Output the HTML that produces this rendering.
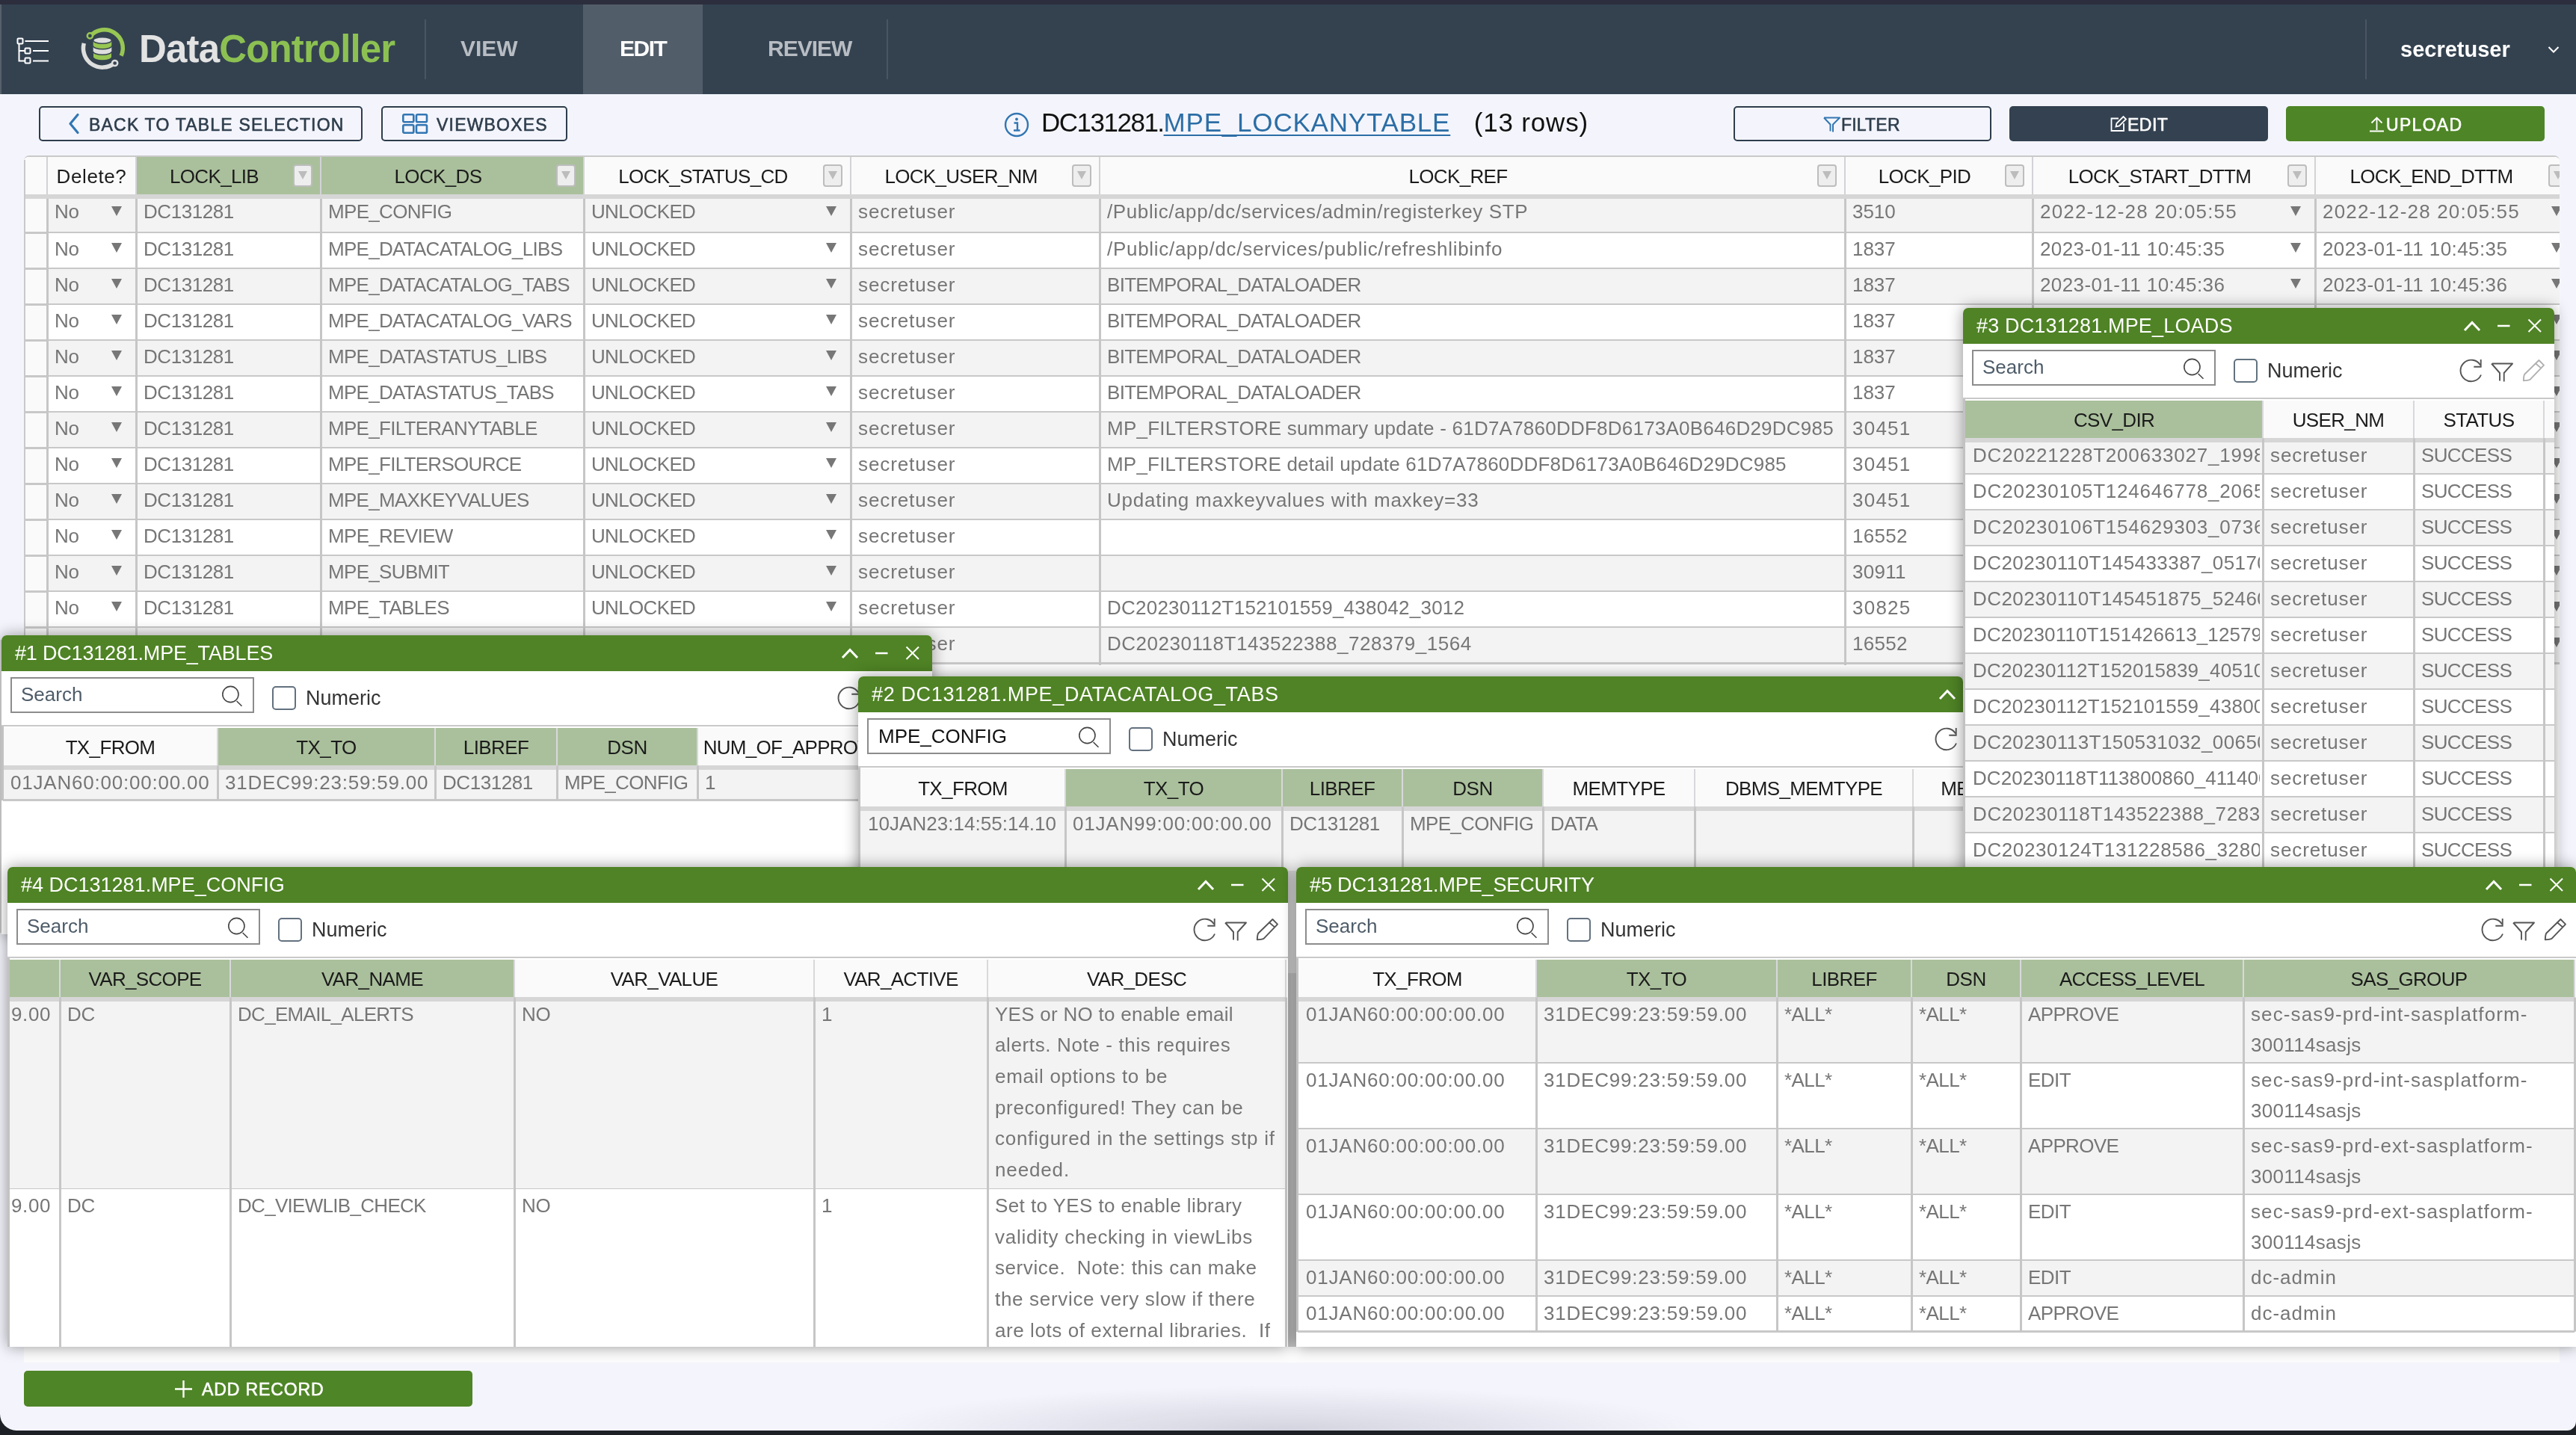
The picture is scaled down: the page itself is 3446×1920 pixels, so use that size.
<!DOCTYPE html><html><head><meta charset="utf-8"><style>
*{box-sizing:border-box;margin:0;padding:0}
html,body{width:3446px;height:1920px;overflow:hidden;background:#f4f5fc;font-family:"Liberation Sans",sans-serif}
body div, body span, body svg{position:absolute}
.c{font-size:26px;color:#767676;white-space:pre-wrap;overflow:hidden;word-break:normal}
.nw{white-space:nowrap}
.dd{width:0;height:0;border-left:7px solid transparent;border-right:7px solid transparent;border-top:13px solid #777}
.fb{width:26px;height:30px;background:#eeeeee;border:2px solid #bdbdbd;border-radius:4px}
.fb::after{content:"";position:absolute;left:5px;top:7px;border-left:6px solid transparent;border-right:6px solid transparent;border-top:11px solid #bcbcbc}
.win{background:#fff;box-shadow:0 0 20px rgba(0,0,0,.4);overflow:hidden;border-radius:7px 7px 0 0}
.tb{left:0;top:0;right:0;height:48px;background:#4f8325}
.tt{font-size:27px;color:#fff;top:10px;white-space:nowrap}
.srch{border:2px solid #8c8c8c;background:#fff}
.ph{font-size:26px;color:#4e5b68;left:14px;top:8px}
.chk{width:32px;height:32px;border:2px solid #62717f;border-radius:5px;background:#fff}
.num{font-size:26px;color:#2a2a2a}
</style></head><body><div id="root" style="left:0;top:0;width:3446px;height:1920px;will-change:transform">

<div style="left:0px;top:0px;width:3446px;height:126px;background:#344250"></div>
<div style="left:0px;top:0px;width:3446px;height:6px;background:#2c2e3d"></div>
<div style="left:0px;top:6px;width:2px;height:120px;background:#56606b"></div>
<svg style="left:0;top:0" width="200" height="126" viewBox="0 0 200 126">
<g fill="none" stroke="#fff" stroke-width="2" transform="translate(0 1)">
<rect x="23.5" y="50.5" width="7" height="7" rx="1"/>
<rect x="33.5" y="63.5" width="7" height="7" rx="1"/>
<rect x="33.5" y="76.5" width="7" height="7" rx="1"/>
<path d="M25.5 57.5 V80.5 H33.5 M25.5 67 H33.5"/>
<path d="M33.5 54 H65 M44 67 H65 M44 80.5 H65"/>
</g>
<g transform="translate(137 65.5) scale(0.95) translate(-137 -64)"><g fill="none" stroke-width="5.8">
<path d="M111 56 A27 27 0 0 0 154 84" stroke="#dedede"/>
<path d="M120 46 A26 26 0 0 1 163.5 73.5" stroke="#98c653"/>
</g>
<circle cx="154.5" cy="84" r="3.8" fill="#344250" stroke="#dedede" stroke-width="2.6"/>
<circle cx="119.5" cy="45.5" r="3.8" fill="#344250" stroke="#98c653" stroke-width="2.6"/>
</g><rect x="125" y="69" width="24" height="7" fill="#98c653"/>
<ellipse cx="137" cy="76" rx="12" ry="4.2" fill="#98c653"/>
<ellipse cx="137" cy="69" rx="12.3" ry="4.2" fill="#dedede" stroke="#344250" stroke-width="1.4"/>
<rect x="124.7" y="61" width="24.6" height="8" fill="#dedede"/>
<ellipse cx="137" cy="61.5" rx="12.3" ry="4.2" fill="#98c653" stroke="#344250" stroke-width="1.4"/>
<rect x="124.7" y="54" width="24.6" height="7.5" fill="#98c653"/>
<ellipse cx="137" cy="54" rx="12.3" ry="4.2" fill="#dedede" stroke="#344250" stroke-width="1.4"/>
</svg>
<div style="left:186px;top:36px;font-size:51px;font-weight:bold;white-space:nowrap;line-height:60px;letter-spacing:-0.85px"><span style="position:static;color:#e3e3e3">Data</span><span style="position:static;color:#8cc152">Controller</span></div>
<div style="left:568px;top:26px;width:2px;height:80px;background:#4a5562"></div>
<div style="left:1186px;top:26px;width:2px;height:80px;background:#4a5562"></div>
<div style="left:3164px;top:26px;width:2px;height:80px;background:#4a5562"></div>
<div style="left:780px;top:6px;width:160px;height:120px;background:#525d6a"></div>
<div style="left:616px;top:45px;font-size:30px;font-weight:bold;white-space:nowrap;line-height:40px;letter-spacing:0px;color:#b8bdc3">VIEW</div>
<div style="left:829px;top:45px;font-size:30px;font-weight:bold;white-space:nowrap;line-height:40px;letter-spacing:0px;color:#fff;letter-spacing:-1.5px">EDIT</div>
<div style="left:1027px;top:45px;font-size:30px;font-weight:bold;white-space:nowrap;line-height:40px;letter-spacing:0px;color:#b8bdc3;letter-spacing:-1px">REVIEW</div>
<div style="left:3211px;top:46px;font-size:29px;font-weight:bold;white-space:nowrap;line-height:40px;color:#fff">secretuser</div>
<svg style="left:3400px;top:55px" width="30" height="20"><path d="M9.5 8 L16 14.5 L22.5 8" fill="none" stroke="#fff" stroke-width="2"/></svg>
<div style="left:52px;top:142px;width:433px;height:47px;border:2px solid #2e3d4c;border-radius:5px"></div>
<svg style="left:86px;top:150px" width="24" height="32"><path d="M18 3.5 L8 15.5 L18 27.5" fill="none" stroke="#3276b3" stroke-width="3.2" stroke-linecap="round" stroke-linejoin="round"/></svg>
<div style="left:119px;top:152px;font-size:23px;white-space:nowrap;line-height:30px;letter-spacing:1px;color:#2e3d4c;-webkit-text-stroke:0.6px currentColor;letter-spacing:1.2px">BACK TO TABLE SELECTION</div>
<div style="left:510px;top:142px;width:249px;height:47px;border:2px solid #2e3d4c;border-radius:5px"></div>
<svg style="left:536px;top:150px" width="40" height="32"><g fill="none" stroke="#3276b3" stroke-width="2.6">
<rect x="3.3" y="3.3" width="14" height="10" rx="1.5"/><rect x="21" y="3.3" width="14" height="10" rx="1.5"/>
<rect x="3.3" y="17.3" width="14" height="10.5" rx="1.5"/><rect x="21" y="17.3" width="14" height="10.5" rx="1.5"/></g></svg>
<div style="left:584px;top:152px;font-size:23px;white-space:nowrap;line-height:30px;letter-spacing:1px;color:#2e3d4c;-webkit-text-stroke:0.6px currentColor;letter-spacing:1.2px">VIEWBOXES</div>
<svg style="left:1342px;top:149px" width="36" height="36"><circle cx="18" cy="18" r="15" fill="none" stroke="#3276b3" stroke-width="2.4"/>
<circle cx="18" cy="10.5" r="1.9" fill="#3276b3"/><path d="M14.5 15.5 H19 V25.5 M14 25.5 H22.5" fill="none" stroke="#3276b3" stroke-width="2.4"/></svg>
<div style="left:1393px;top:141px;font-size:35px;white-space:nowrap;line-height:46px;color:#111"><span style="position:static;letter-spacing:-1.5px">DC131281.</span><span style="position:static;color:#2c6ea6;text-decoration:underline;text-decoration-thickness:2px;text-underline-offset:4px;letter-spacing:0.8px">MPE_LOCKANYTABLE</span><span style="position:static;letter-spacing:0.8px">&nbsp;&nbsp;&nbsp;(13 rows)</span></div>
<div style="left:2319px;top:142px;width:345px;height:47px;border:2px solid #2e3d4c;border-radius:5px"></div>
<svg style="left:2436px;top:154px" width="28" height="26"><path d="M4 3.5 H25 L16 12.5 V22.5 M12.5 21.5 V12.5 L4 3.5" fill="none" stroke="#3276b3" stroke-width="2" stroke-linejoin="round"/></svg>
<div style="left:2463px;top:152px;font-size:23px;white-space:nowrap;line-height:30px;letter-spacing:1px;color:#2e3d4c;-webkit-text-stroke:0.6px currentColor;letter-spacing:0.2px">FILTER</div>
<div style="left:2688px;top:142px;width:346px;height:47px;background:#334150;border-radius:5px"></div>
<svg style="left:2820px;top:152px" width="28" height="28"><path d="M14 6.5 H4.5 V23 H21 V13" fill="none" stroke="#fff" stroke-width="1.8"/><path d="M10.5 17.5 L11.5 13 L20.5 4 L24 7.5 L15 16.5 Z" fill="none" stroke="#fff" stroke-width="1.8"/></svg>
<div style="left:2846px;top:152px;font-size:23px;white-space:nowrap;line-height:30px;letter-spacing:1px;color:#fff;-webkit-text-stroke:0.6px currentColor;letter-spacing:0.5px">EDIT</div>
<div style="left:3058px;top:142px;width:346px;height:47px;background:#4e8526;border-radius:5px"></div>
<svg style="left:3166px;top:152px" width="28" height="30"><path d="M13.5 5.5 V22 M6.5 12.5 L13.5 5.5 L20.5 12.5 M4 23.5 H23" fill="none" stroke="#fff" stroke-width="1.8"/></svg>
<div style="left:3192px;top:152px;font-size:23px;white-space:nowrap;line-height:30px;letter-spacing:1px;color:#fff;-webkit-text-stroke:0.6px currentColor;letter-spacing:1.3px">UPLOAD</div>
<div style="left:32px;top:208px;width:3392px;height:1615px;overflow:hidden;border-radius:7px 7px 0 0;background:#fcfcfd;border-top:2px solid #c9c9c9">
<div style="left:1px;top:0px;width:30px;height:50px;background:#fafafa"></div>
<div style="left:31px;top:0px;width:119px;height:50px;background:#fafafa"></div>
<div style="left:150px;top:0px;width:247px;height:50px;background:#aac09c"></div>
<div style="left:397px;top:0px;width:352px;height:50px;background:#aac09c"></div>
<div style="left:749px;top:0px;width:357px;height:50px;background:#fafafa"></div>
<div style="left:1106px;top:0px;width:333px;height:50px;background:#fafafa"></div>
<div style="left:1439px;top:0px;width:997px;height:50px;background:#fafafa"></div>
<div style="left:2436px;top:0px;width:251px;height:50px;background:#fafafa"></div>
<div style="left:2687px;top:0px;width:378px;height:50px;background:#fafafa"></div>
<div style="left:3065px;top:0px;width:349px;height:50px;background:#fafafa"></div>
<div style="left:0px;top:54px;width:3400px;height:48px;background:#f3f3f3"></div>
<div style="left:0px;top:100px;width:3400px;height:2.5px;background:#c8c8c8"></div>
<div style="left:0px;top:102px;width:3400px;height:48px;background:#fff"></div>
<div style="left:0px;top:148px;width:3400px;height:2.5px;background:#c8c8c8"></div>
<div style="left:0px;top:150px;width:3400px;height:48px;background:#f3f3f3"></div>
<div style="left:0px;top:196px;width:3400px;height:2.5px;background:#c8c8c8"></div>
<div style="left:0px;top:198px;width:3400px;height:48px;background:#fff"></div>
<div style="left:0px;top:244px;width:3400px;height:2.5px;background:#c8c8c8"></div>
<div style="left:0px;top:246px;width:3400px;height:48px;background:#f3f3f3"></div>
<div style="left:0px;top:292px;width:3400px;height:2.5px;background:#c8c8c8"></div>
<div style="left:0px;top:294px;width:3400px;height:48px;background:#fff"></div>
<div style="left:0px;top:340px;width:3400px;height:2.5px;background:#c8c8c8"></div>
<div style="left:0px;top:342px;width:3400px;height:48px;background:#f3f3f3"></div>
<div style="left:0px;top:388px;width:3400px;height:2.5px;background:#c8c8c8"></div>
<div style="left:0px;top:390px;width:3400px;height:48px;background:#fff"></div>
<div style="left:0px;top:436px;width:3400px;height:2.5px;background:#c8c8c8"></div>
<div style="left:0px;top:438px;width:3400px;height:48px;background:#f3f3f3"></div>
<div style="left:0px;top:484px;width:3400px;height:2.5px;background:#c8c8c8"></div>
<div style="left:0px;top:486px;width:3400px;height:48px;background:#fff"></div>
<div style="left:0px;top:532px;width:3400px;height:2.5px;background:#c8c8c8"></div>
<div style="left:0px;top:534px;width:3400px;height:48px;background:#f3f3f3"></div>
<div style="left:0px;top:580px;width:3400px;height:2.5px;background:#c8c8c8"></div>
<div style="left:0px;top:582px;width:3400px;height:48px;background:#fff"></div>
<div style="left:0px;top:628px;width:3400px;height:2.5px;background:#c8c8c8"></div>
<div style="left:0px;top:630px;width:3400px;height:48px;background:#f3f3f3"></div>
<div style="left:0px;top:676px;width:3400px;height:2.5px;background:#c8c8c8"></div>
<div style="left:2px;top:54px;width:29px;height:624px;background:#fafafa"></div>
<div style="left:2px;top:100px;width:29px;height:2.5px;background:#c8c8c8"></div>
<div style="left:2px;top:148px;width:29px;height:2.5px;background:#c8c8c8"></div>
<div style="left:2px;top:196px;width:29px;height:2.5px;background:#c8c8c8"></div>
<div style="left:2px;top:244px;width:29px;height:2.5px;background:#c8c8c8"></div>
<div style="left:2px;top:292px;width:29px;height:2.5px;background:#c8c8c8"></div>
<div style="left:2px;top:340px;width:29px;height:2.5px;background:#c8c8c8"></div>
<div style="left:2px;top:388px;width:29px;height:2.5px;background:#c8c8c8"></div>
<div style="left:2px;top:436px;width:29px;height:2.5px;background:#c8c8c8"></div>
<div style="left:2px;top:484px;width:29px;height:2.5px;background:#c8c8c8"></div>
<div style="left:2px;top:532px;width:29px;height:2.5px;background:#c8c8c8"></div>
<div style="left:2px;top:580px;width:29px;height:2.5px;background:#c8c8c8"></div>
<div style="left:2px;top:628px;width:29px;height:2.5px;background:#c8c8c8"></div>
<div style="left:2px;top:676px;width:29px;height:2.5px;background:#c8c8c8"></div>
<div style="left:0px;top:50px;width:3400px;height:6px;background:#d6d6d6"></div>
<div style="left:30px;top:0px;width:2px;height:50px;background:#d3d3d7"></div>
<div style="left:29.5px;top:56px;width:3px;height:624px;background:#c6c6c6"></div>
<div style="left:149px;top:0px;width:2px;height:50px;background:#d3d3d7"></div>
<div style="left:148.5px;top:56px;width:3px;height:624px;background:#c6c6c6"></div>
<div style="left:31px;top:0px;width:119px;height:50px;line-height:52px;text-align:center;color:#1b1b1b;font-size:26px;white-space:nowrap"><span style="position:static;letter-spacing:0.61px">Delete?</span></div>
<div style="left:396px;top:0px;width:2px;height:50px;background:#d3d3d7"></div>
<div style="left:395.5px;top:56px;width:3px;height:624px;background:#c6c6c6"></div>
<div style="left:150px;top:0px;width:209px;height:50px;line-height:52px;text-align:center;color:#1b1b1b;font-size:26px;white-space:nowrap"><span style="position:static;letter-spacing:-0.65px">LOCK_LIB</span></div>
<div class="fb" style="left:360px;top:10px"></div>
<div style="left:748px;top:0px;width:2px;height:50px;background:#d3d3d7"></div>
<div style="left:747.5px;top:56px;width:3px;height:624px;background:#c6c6c6"></div>
<div style="left:397px;top:0px;width:314px;height:50px;line-height:52px;text-align:center;color:#1b1b1b;font-size:26px;white-space:nowrap"><span style="position:static;letter-spacing:-0.64px">LOCK_DS</span></div>
<div class="fb" style="left:712px;top:10px"></div>
<div style="left:1105px;top:0px;width:2px;height:50px;background:#d3d3d7"></div>
<div style="left:1104.5px;top:56px;width:3px;height:624px;background:#c6c6c6"></div>
<div style="left:749px;top:0px;width:319px;height:50px;line-height:52px;text-align:center;color:#1b1b1b;font-size:26px;white-space:nowrap"><span style="position:static;letter-spacing:-0.69px">LOCK_STATUS_CD</span></div>
<div class="fb" style="left:1069px;top:10px"></div>
<div style="left:1438px;top:0px;width:2px;height:50px;background:#d3d3d7"></div>
<div style="left:1437.5px;top:56px;width:3px;height:624px;background:#c6c6c6"></div>
<div style="left:1106px;top:0px;width:295px;height:50px;line-height:52px;text-align:center;color:#1b1b1b;font-size:26px;white-space:nowrap"><span style="position:static;letter-spacing:-0.68px">LOCK_USER_NM</span></div>
<div class="fb" style="left:1402px;top:10px"></div>
<div style="left:2435px;top:0px;width:2px;height:50px;background:#d3d3d7"></div>
<div style="left:2434.5px;top:56px;width:3px;height:624px;background:#c6c6c6"></div>
<div style="left:1439px;top:0px;width:959px;height:50px;line-height:52px;text-align:center;color:#1b1b1b;font-size:26px;white-space:nowrap"><span style="position:static;letter-spacing:-0.65px">LOCK_REF</span></div>
<div class="fb" style="left:2399px;top:10px"></div>
<div style="left:2686px;top:0px;width:2px;height:50px;background:#d3d3d7"></div>
<div style="left:2685.5px;top:56px;width:3px;height:624px;background:#c6c6c6"></div>
<div style="left:2436px;top:0px;width:213px;height:50px;line-height:52px;text-align:center;color:#1b1b1b;font-size:26px;white-space:nowrap"><span style="position:static;letter-spacing:-0.65px">LOCK_PID</span></div>
<div class="fb" style="left:2650px;top:10px"></div>
<div style="left:3064px;top:0px;width:2px;height:50px;background:#d3d3d7"></div>
<div style="left:3063.5px;top:56px;width:3px;height:624px;background:#c6c6c6"></div>
<div style="left:2687px;top:0px;width:340px;height:50px;line-height:52px;text-align:center;color:#1b1b1b;font-size:26px;white-space:nowrap"><span style="position:static;letter-spacing:-0.69px">LOCK_START_DTTM</span></div>
<div class="fb" style="left:3028px;top:10px"></div>
<div style="left:3413px;top:0px;width:2px;height:50px;background:#d3d3d7"></div>
<div style="left:3412.5px;top:56px;width:3px;height:624px;background:#c6c6c6"></div>
<div style="left:3065px;top:0px;width:311px;height:50px;line-height:52px;text-align:center;color:#1b1b1b;font-size:26px;white-space:nowrap"><span style="position:static;letter-spacing:-0.69px">LOCK_END_DTTM</span></div>
<div class="fb" style="left:3377px;top:10px"></div>
<div class="c nw" style="left:41px;top:55px;line-height:36px"><span style="position:static;letter-spacing:-0.38px">No</span></div>
<div class="dd" style="left:117px;top:66px"></div>
<div class="c nw" style="left:160px;top:55px;line-height:36px"><span style="position:static;letter-spacing:-0.43px">DC131281</span></div>
<div class="c nw" style="left:407px;top:55px;line-height:36px"><span style="position:static;letter-spacing:-0.67px">MPE_CONFIG</span></div>
<div class="c nw" style="left:759px;top:55px;line-height:36px"><span style="position:static;letter-spacing:-0.66px">UNLOCKED</span></div>
<div class="dd" style="left:1073px;top:66px"></div>
<div class="c nw" style="left:1116px;top:55px;line-height:36px"><span style="position:static;letter-spacing:0.90px">secretuser</span></div>
<div class="c nw" style="left:1449px;top:55px;line-height:36px"><span style="position:static;letter-spacing:0.60px">/Public/app/dc/services/admin/registerkey STP</span></div>
<div class="c nw" style="left:2446px;top:55px;line-height:36px"><span style="position:static;letter-spacing:-0.05px">3510</span></div>
<div class="c nw" style="left:2697px;top:55px;line-height:36px"><span style="position:static;letter-spacing:1.18px">2022-12-28 20:05:55</span></div>
<div class="dd" style="left:3032px;top:66px"></div>
<div class="c nw" style="left:3075px;top:55px;line-height:36px"><span style="position:static;letter-spacing:1.18px">2022-12-28 20:05:55</span></div>
<div class="dd" style="left:3381px;top:66px"></div>
<div class="c nw" style="left:41px;top:105px;line-height:36px"><span style="position:static;letter-spacing:-0.38px">No</span></div>
<div class="dd" style="left:117px;top:115px"></div>
<div class="c nw" style="left:160px;top:105px;line-height:36px"><span style="position:static;letter-spacing:-0.43px">DC131281</span></div>
<div class="c nw" style="left:407px;top:105px;line-height:36px"><span style="position:static;letter-spacing:-0.71px">MPE_DATACATALOG_LIBS</span></div>
<div class="c nw" style="left:759px;top:105px;line-height:36px"><span style="position:static;letter-spacing:-0.66px">UNLOCKED</span></div>
<div class="dd" style="left:1073px;top:115px"></div>
<div class="c nw" style="left:1116px;top:105px;line-height:36px"><span style="position:static;letter-spacing:0.90px">secretuser</span></div>
<div class="c nw" style="left:1449px;top:105px;line-height:36px"><span style="position:static;letter-spacing:0.71px">/Public/app/dc/services/public/refreshlibinfo</span></div>
<div class="c nw" style="left:2446px;top:105px;line-height:36px"><span style="position:static;letter-spacing:-0.05px">1837</span></div>
<div class="c nw" style="left:2697px;top:105px;line-height:36px"><span style="position:static;letter-spacing:0.41px">2023-01-11 10:45:35</span></div>
<div class="dd" style="left:3032px;top:115px"></div>
<div class="c nw" style="left:3075px;top:105px;line-height:36px"><span style="position:static;letter-spacing:0.41px">2023-01-11 10:45:35</span></div>
<div class="dd" style="left:3381px;top:115px"></div>
<div class="c nw" style="left:41px;top:153px;line-height:36px"><span style="position:static;letter-spacing:-0.38px">No</span></div>
<div class="dd" style="left:117px;top:163px"></div>
<div class="c nw" style="left:160px;top:153px;line-height:36px"><span style="position:static;letter-spacing:-0.43px">DC131281</span></div>
<div class="c nw" style="left:407px;top:153px;line-height:36px"><span style="position:static;letter-spacing:-0.71px">MPE_DATACATALOG_TABS</span></div>
<div class="c nw" style="left:759px;top:153px;line-height:36px"><span style="position:static;letter-spacing:-0.66px">UNLOCKED</span></div>
<div class="dd" style="left:1073px;top:163px"></div>
<div class="c nw" style="left:1116px;top:153px;line-height:36px"><span style="position:static;letter-spacing:0.90px">secretuser</span></div>
<div class="c nw" style="left:1449px;top:153px;line-height:36px"><span style="position:static;letter-spacing:-0.71px">BITEMPORAL_DATALOADER</span></div>
<div class="c nw" style="left:2446px;top:153px;line-height:36px"><span style="position:static;letter-spacing:-0.05px">1837</span></div>
<div class="c nw" style="left:2697px;top:153px;line-height:36px"><span style="position:static;letter-spacing:0.41px">2023-01-11 10:45:36</span></div>
<div class="dd" style="left:3032px;top:163px"></div>
<div class="c nw" style="left:3075px;top:153px;line-height:36px"><span style="position:static;letter-spacing:0.41px">2023-01-11 10:45:36</span></div>
<div class="dd" style="left:3381px;top:163px"></div>
<div class="c nw" style="left:41px;top:201px;line-height:36px"><span style="position:static;letter-spacing:-0.38px">No</span></div>
<div class="dd" style="left:117px;top:211px"></div>
<div class="c nw" style="left:160px;top:201px;line-height:36px"><span style="position:static;letter-spacing:-0.43px">DC131281</span></div>
<div class="c nw" style="left:407px;top:201px;line-height:36px"><span style="position:static;letter-spacing:-0.71px">MPE_DATACATALOG_VARS</span></div>
<div class="c nw" style="left:759px;top:201px;line-height:36px"><span style="position:static;letter-spacing:-0.66px">UNLOCKED</span></div>
<div class="dd" style="left:1073px;top:211px"></div>
<div class="c nw" style="left:1116px;top:201px;line-height:36px"><span style="position:static;letter-spacing:0.90px">secretuser</span></div>
<div class="c nw" style="left:1449px;top:201px;line-height:36px"><span style="position:static;letter-spacing:-0.71px">BITEMPORAL_DATALOADER</span></div>
<div class="c nw" style="left:2446px;top:201px;line-height:36px"><span style="position:static;letter-spacing:-0.05px">1837</span></div>
<div class="c nw" style="left:2697px;top:201px;line-height:36px"><span style="position:static;letter-spacing:0.41px">2023-01-11 10:45:36</span></div>
<div class="dd" style="left:3032px;top:211px"></div>
<div class="c nw" style="left:3075px;top:201px;line-height:36px"><span style="position:static;letter-spacing:0.41px">2023-01-11 10:45:36</span></div>
<div class="dd" style="left:3381px;top:211px"></div>
<div class="c nw" style="left:41px;top:249px;line-height:36px"><span style="position:static;letter-spacing:-0.38px">No</span></div>
<div class="dd" style="left:117px;top:259px"></div>
<div class="c nw" style="left:160px;top:249px;line-height:36px"><span style="position:static;letter-spacing:-0.43px">DC131281</span></div>
<div class="c nw" style="left:407px;top:249px;line-height:36px"><span style="position:static;letter-spacing:-0.71px">MPE_DATASTATUS_LIBS</span></div>
<div class="c nw" style="left:759px;top:249px;line-height:36px"><span style="position:static;letter-spacing:-0.66px">UNLOCKED</span></div>
<div class="dd" style="left:1073px;top:259px"></div>
<div class="c nw" style="left:1116px;top:249px;line-height:36px"><span style="position:static;letter-spacing:0.90px">secretuser</span></div>
<div class="c nw" style="left:1449px;top:249px;line-height:36px"><span style="position:static;letter-spacing:-0.71px">BITEMPORAL_DATALOADER</span></div>
<div class="c nw" style="left:2446px;top:249px;line-height:36px"><span style="position:static;letter-spacing:-0.05px">1837</span></div>
<div class="c nw" style="left:2697px;top:249px;line-height:36px"><span style="position:static;letter-spacing:0.41px">2023-01-11 10:45:36</span></div>
<div class="dd" style="left:3032px;top:259px"></div>
<div class="c nw" style="left:3075px;top:249px;line-height:36px"><span style="position:static;letter-spacing:0.41px">2023-01-11 10:45:36</span></div>
<div class="dd" style="left:3381px;top:259px"></div>
<div class="c nw" style="left:41px;top:297px;line-height:36px"><span style="position:static;letter-spacing:-0.38px">No</span></div>
<div class="dd" style="left:117px;top:307px"></div>
<div class="c nw" style="left:160px;top:297px;line-height:36px"><span style="position:static;letter-spacing:-0.43px">DC131281</span></div>
<div class="c nw" style="left:407px;top:297px;line-height:36px"><span style="position:static;letter-spacing:-0.71px">MPE_DATASTATUS_TABS</span></div>
<div class="c nw" style="left:759px;top:297px;line-height:36px"><span style="position:static;letter-spacing:-0.66px">UNLOCKED</span></div>
<div class="dd" style="left:1073px;top:307px"></div>
<div class="c nw" style="left:1116px;top:297px;line-height:36px"><span style="position:static;letter-spacing:0.90px">secretuser</span></div>
<div class="c nw" style="left:1449px;top:297px;line-height:36px"><span style="position:static;letter-spacing:-0.71px">BITEMPORAL_DATALOADER</span></div>
<div class="c nw" style="left:2446px;top:297px;line-height:36px"><span style="position:static;letter-spacing:-0.05px">1837</span></div>
<div class="c nw" style="left:2697px;top:297px;line-height:36px"><span style="position:static;letter-spacing:0.41px">2023-01-11 10:45:36</span></div>
<div class="dd" style="left:3032px;top:307px"></div>
<div class="c nw" style="left:3075px;top:297px;line-height:36px"><span style="position:static;letter-spacing:0.41px">2023-01-11 10:45:36</span></div>
<div class="dd" style="left:3381px;top:307px"></div>
<div class="c nw" style="left:41px;top:345px;line-height:36px"><span style="position:static;letter-spacing:-0.38px">No</span></div>
<div class="dd" style="left:117px;top:355px"></div>
<div class="c nw" style="left:160px;top:345px;line-height:36px"><span style="position:static;letter-spacing:-0.43px">DC131281</span></div>
<div class="c nw" style="left:407px;top:345px;line-height:36px"><span style="position:static;letter-spacing:-0.71px">MPE_FILTERANYTABLE</span></div>
<div class="c nw" style="left:759px;top:345px;line-height:36px"><span style="position:static;letter-spacing:-0.66px">UNLOCKED</span></div>
<div class="dd" style="left:1073px;top:355px"></div>
<div class="c nw" style="left:1116px;top:345px;line-height:36px"><span style="position:static;letter-spacing:0.90px">secretuser</span></div>
<div class="c nw" style="left:1449px;top:345px;line-height:36px"><span style="position:static;letter-spacing:0.23px">MP_FILTERSTORE summary update - 61D7A7860DDF8D6173A0B646D29DC985</span></div>
<div class="c nw" style="left:2446px;top:345px;line-height:36px"><span style="position:static;letter-spacing:1.23px">30451</span></div>
<div class="c nw" style="left:2697px;top:345px;line-height:36px"><span style="position:static;letter-spacing:0.41px">2023-01-11 10:45:36</span></div>
<div class="dd" style="left:3032px;top:355px"></div>
<div class="c nw" style="left:3075px;top:345px;line-height:36px"><span style="position:static;letter-spacing:0.41px">2023-01-11 10:45:36</span></div>
<div class="dd" style="left:3381px;top:355px"></div>
<div class="c nw" style="left:41px;top:393px;line-height:36px"><span style="position:static;letter-spacing:-0.38px">No</span></div>
<div class="dd" style="left:117px;top:403px"></div>
<div class="c nw" style="left:160px;top:393px;line-height:36px"><span style="position:static;letter-spacing:-0.43px">DC131281</span></div>
<div class="c nw" style="left:407px;top:393px;line-height:36px"><span style="position:static;letter-spacing:-0.70px">MPE_FILTERSOURCE</span></div>
<div class="c nw" style="left:759px;top:393px;line-height:36px"><span style="position:static;letter-spacing:-0.66px">UNLOCKED</span></div>
<div class="dd" style="left:1073px;top:403px"></div>
<div class="c nw" style="left:1116px;top:393px;line-height:36px"><span style="position:static;letter-spacing:0.90px">secretuser</span></div>
<div class="c nw" style="left:1449px;top:393px;line-height:36px"><span style="position:static;letter-spacing:0.20px">MP_FILTERSTORE detail update 61D7A7860DDF8D6173A0B646D29DC985</span></div>
<div class="c nw" style="left:2446px;top:393px;line-height:36px"><span style="position:static;letter-spacing:1.23px">30451</span></div>
<div class="c nw" style="left:2697px;top:393px;line-height:36px"><span style="position:static;letter-spacing:0.41px">2023-01-11 10:45:36</span></div>
<div class="dd" style="left:3032px;top:403px"></div>
<div class="c nw" style="left:3075px;top:393px;line-height:36px"><span style="position:static;letter-spacing:0.41px">2023-01-11 10:45:36</span></div>
<div class="dd" style="left:3381px;top:403px"></div>
<div class="c nw" style="left:41px;top:441px;line-height:36px"><span style="position:static;letter-spacing:-0.38px">No</span></div>
<div class="dd" style="left:117px;top:451px"></div>
<div class="c nw" style="left:160px;top:441px;line-height:36px"><span style="position:static;letter-spacing:-0.43px">DC131281</span></div>
<div class="c nw" style="left:407px;top:441px;line-height:36px"><span style="position:static;letter-spacing:-0.70px">MPE_MAXKEYVALUES</span></div>
<div class="c nw" style="left:759px;top:441px;line-height:36px"><span style="position:static;letter-spacing:-0.66px">UNLOCKED</span></div>
<div class="dd" style="left:1073px;top:451px"></div>
<div class="c nw" style="left:1116px;top:441px;line-height:36px"><span style="position:static;letter-spacing:0.90px">secretuser</span></div>
<div class="c nw" style="left:1449px;top:441px;line-height:36px"><span style="position:static;letter-spacing:0.75px">Updating maxkeyvalues with maxkey=33</span></div>
<div class="c nw" style="left:2446px;top:441px;line-height:36px"><span style="position:static;letter-spacing:1.23px">30451</span></div>
<div class="c nw" style="left:2697px;top:441px;line-height:36px"><span style="position:static;letter-spacing:0.41px">2023-01-11 10:45:36</span></div>
<div class="dd" style="left:3032px;top:451px"></div>
<div class="c nw" style="left:3075px;top:441px;line-height:36px"><span style="position:static;letter-spacing:0.41px">2023-01-11 10:45:36</span></div>
<div class="dd" style="left:3381px;top:451px"></div>
<div class="c nw" style="left:41px;top:489px;line-height:36px"><span style="position:static;letter-spacing:-0.38px">No</span></div>
<div class="dd" style="left:117px;top:499px"></div>
<div class="c nw" style="left:160px;top:489px;line-height:36px"><span style="position:static;letter-spacing:-0.43px">DC131281</span></div>
<div class="c nw" style="left:407px;top:489px;line-height:36px"><span style="position:static;letter-spacing:-0.67px">MPE_REVIEW</span></div>
<div class="c nw" style="left:759px;top:489px;line-height:36px"><span style="position:static;letter-spacing:-0.66px">UNLOCKED</span></div>
<div class="dd" style="left:1073px;top:499px"></div>
<div class="c nw" style="left:1116px;top:489px;line-height:36px"><span style="position:static;letter-spacing:0.90px">secretuser</span></div>
<div class="c nw" style="left:2446px;top:489px;line-height:36px"><span style="position:static;letter-spacing:0.26px">16552</span></div>
<div class="c nw" style="left:2697px;top:489px;line-height:36px"><span style="position:static;letter-spacing:0.41px">2023-01-11 10:45:36</span></div>
<div class="dd" style="left:3032px;top:499px"></div>
<div class="c nw" style="left:3075px;top:489px;line-height:36px"><span style="position:static;letter-spacing:0.41px">2023-01-11 10:45:36</span></div>
<div class="dd" style="left:3381px;top:499px"></div>
<div class="c nw" style="left:41px;top:537px;line-height:36px"><span style="position:static;letter-spacing:-0.38px">No</span></div>
<div class="dd" style="left:117px;top:547px"></div>
<div class="c nw" style="left:160px;top:537px;line-height:36px"><span style="position:static;letter-spacing:-0.43px">DC131281</span></div>
<div class="c nw" style="left:407px;top:537px;line-height:36px"><span style="position:static;letter-spacing:-0.67px">MPE_SUBMIT</span></div>
<div class="c nw" style="left:759px;top:537px;line-height:36px"><span style="position:static;letter-spacing:-0.66px">UNLOCKED</span></div>
<div class="dd" style="left:1073px;top:547px"></div>
<div class="c nw" style="left:1116px;top:537px;line-height:36px"><span style="position:static;letter-spacing:0.90px">secretuser</span></div>
<div class="c nw" style="left:2446px;top:537px;line-height:36px"><span style="position:static;letter-spacing:0.26px">30911</span></div>
<div class="c nw" style="left:2697px;top:537px;line-height:36px"><span style="position:static;letter-spacing:0.41px">2023-01-11 10:45:36</span></div>
<div class="dd" style="left:3032px;top:547px"></div>
<div class="c nw" style="left:3075px;top:537px;line-height:36px"><span style="position:static;letter-spacing:0.41px">2023-01-11 10:45:36</span></div>
<div class="dd" style="left:3381px;top:547px"></div>
<div class="c nw" style="left:41px;top:585px;line-height:36px"><span style="position:static;letter-spacing:-0.38px">No</span></div>
<div class="dd" style="left:117px;top:595px"></div>
<div class="c nw" style="left:160px;top:585px;line-height:36px"><span style="position:static;letter-spacing:-0.43px">DC131281</span></div>
<div class="c nw" style="left:407px;top:585px;line-height:36px"><span style="position:static;letter-spacing:-0.67px">MPE_TABLES</span></div>
<div class="c nw" style="left:759px;top:585px;line-height:36px"><span style="position:static;letter-spacing:-0.66px">UNLOCKED</span></div>
<div class="dd" style="left:1073px;top:595px"></div>
<div class="c nw" style="left:1116px;top:585px;line-height:36px"><span style="position:static;letter-spacing:0.90px">secretuser</span></div>
<div class="c nw" style="left:1449px;top:585px;line-height:36px"><span style="position:static;letter-spacing:0.23px">DC20230112T152101559_438042_3012</span></div>
<div class="c nw" style="left:2446px;top:585px;line-height:36px"><span style="position:static;letter-spacing:1.23px">30825</span></div>
<div class="c nw" style="left:2697px;top:585px;line-height:36px"><span style="position:static;letter-spacing:0.41px">2023-01-11 10:45:36</span></div>
<div class="dd" style="left:3032px;top:595px"></div>
<div class="c nw" style="left:3075px;top:585px;line-height:36px"><span style="position:static;letter-spacing:0.41px">2023-01-11 10:45:36</span></div>
<div class="dd" style="left:3381px;top:595px"></div>
<div class="c nw" style="left:41px;top:633px;line-height:36px"><span style="position:static;letter-spacing:-0.38px">No</span></div>
<div class="dd" style="left:117px;top:643px"></div>
<div class="c nw" style="left:160px;top:633px;line-height:36px"><span style="position:static;letter-spacing:-0.43px">DC131281</span></div>
<div class="c nw" style="left:407px;top:633px;line-height:36px"><span style="position:static;letter-spacing:-0.70px">MPE_VALIDATIONS</span></div>
<div class="c nw" style="left:759px;top:633px;line-height:36px"><span style="position:static;letter-spacing:-0.66px">UNLOCKED</span></div>
<div class="dd" style="left:1073px;top:643px"></div>
<div class="c nw" style="left:1116px;top:633px;line-height:36px"><span style="position:static;letter-spacing:0.90px">secretuser</span></div>
<div class="c nw" style="left:1449px;top:633px;line-height:36px"><span style="position:static;letter-spacing:0.53px">DC20230118T143522388_728379_1564</span></div>
<div class="c nw" style="left:2446px;top:633px;line-height:36px"><span style="position:static;letter-spacing:0.26px">16552</span></div>
<div class="c nw" style="left:2697px;top:633px;line-height:36px"><span style="position:static;letter-spacing:0.41px">2023-01-11 10:45:36</span></div>
<div class="dd" style="left:3032px;top:643px"></div>
<div class="c nw" style="left:3075px;top:633px;line-height:36px"><span style="position:static;letter-spacing:0.41px">2023-01-11 10:45:36</span></div>
<div class="dd" style="left:3381px;top:643px"></div>
</div>
<div style="left:32px;top:214px;width:2px;height:672px;background:#c9c9c9"></div>
<div class="win" style="left:2px;top:850px;width:1245px;height:400px;z-index:2">
<div class="tb" style="width:1245px"></div>
<div style="left:18px;top:6px;font-size:27px;color:#fff;line-height:36px;white-space:nowrap"><span style="position:static;letter-spacing:-0.19px">#1 DC131281.MPE_TABLES</span></div>
<svg style="left:1122px;top:7px" width="125" height="40" viewBox="0 0 125 40">
<path d="M3 23 L13 12.5 L23 23" fill="none" stroke="#fff" stroke-width="3"/>
<path d="M47 17 H63.5" stroke="#fff" stroke-width="2.6"/>
<path d="M88.5 8.5 L105 25 M105 8.5 L88.5 25" stroke="#fff" stroke-width="2"/>
</svg>
<div class="srch" style="left:12px;top:56px;width:326px;height:48px"></div>
<div style="left:26px;top:61px;font-size:26px;color:#4e5c69;line-height:36px;white-space:nowrap">Search</div>
<svg style="left:292px;top:65px" width="36" height="34"><g fill="none" stroke="#444" stroke-width="1.6"><circle cx="14.4" cy="14" r="10.6"/><path d="M22.6 23 L29.5 29.8"/></g></svg>
<div class="chk" style="left:362px;top:68px"></div>
<div style="left:407px;top:66px;font-size:27px;color:#333;line-height:36px;white-space:nowrap">Numeric</div>
<svg style="left:1118px;top:68px" width="120" height="34" viewBox="0 0 120 34"><g fill="none" stroke="#555" stroke-width="1.9"><path d="M29 21.5 A14.3 14.3 0 1 1 28.1 8.6"/><path d="M28.7 1 V10.7 H19.3"/><path d="M44 6.5 H71 L59.7 19 V30.5 M54 29.5 V19 L43 6.5" stroke-linejoin="round"/></g><g fill="none" stroke="#555" stroke-width="1.9" stroke-linejoin="round"><path d="M106.4 2 L113 8.6 L94.5 27.8 Q92 29 85.8 29.2 Q86 23 87.2 20.8 Z"/><path d="M102.2 6.5 L108.8 12.1"/></g></svg>
<div style="left:0px;top:120px;width:1245px;height:2px;background:#c9c9c9"></div>
<div style="left:2px;top:124px;width:287px;height:50px;background:#fafafa"></div>
<div style="left:289px;top:124px;width:291px;height:50px;background:#aac09c"></div>
<div style="left:580px;top:124px;width:163px;height:50px;background:#aac09c"></div>
<div style="left:743px;top:124px;width:188px;height:50px;background:#aac09c"></div>
<div style="left:931px;top:124px;width:429px;height:50px;background:#fafafa"></div>
<div style="left:2px;top:174.5px;width:1358px;height:46.0px;background:#f3f3f3"></div>
<div style="left:2px;top:219.25px;width:1358px;height:2.5px;background:#c8c8c8"></div>
<div style="left:2px;top:174px;width:1358px;height:6px;background:#d6d6d6"></div>
<div style="left:0px;top:122px;width:3px;height:98.5px;background:#c2c2c2"></div>
<div style="left:288px;top:124px;width:2px;height:50px;background:#d8d8dc"></div>
<div style="left:287.5px;top:174px;width:3px;height:46.5px;background:#c6c6c6;border-radius:1.5px"></div>
<div style="left:2px;top:124px;width:287px;height:50px;line-height:52px;text-align:center;color:#1b1b1b;font-size:26px;white-space:nowrap;overflow:hidden"><span style="position:static;letter-spacing:-0.64px">TX_FROM</span></div>
<div style="left:579px;top:124px;width:2px;height:50px;background:#d8d8dc"></div>
<div style="left:578.5px;top:174px;width:3px;height:46.5px;background:#c6c6c6;border-radius:1.5px"></div>
<div style="left:289px;top:124px;width:291px;height:50px;line-height:52px;text-align:center;color:#1b1b1b;font-size:26px;white-space:nowrap;overflow:hidden"><span style="position:static;letter-spacing:-0.59px">TX_TO</span></div>
<div style="left:742px;top:124px;width:2px;height:50px;background:#d8d8dc"></div>
<div style="left:741.5px;top:174px;width:3px;height:46.5px;background:#c6c6c6;border-radius:1.5px"></div>
<div style="left:580px;top:124px;width:163px;height:50px;line-height:52px;text-align:center;color:#1b1b1b;font-size:26px;white-space:nowrap;overflow:hidden"><span style="position:static;letter-spacing:-0.62px">LIBREF</span></div>
<div style="left:930px;top:124px;width:2px;height:50px;background:#d8d8dc"></div>
<div style="left:929.5px;top:174px;width:3px;height:46.5px;background:#c6c6c6;border-radius:1.5px"></div>
<div style="left:743px;top:124px;width:188px;height:50px;line-height:52px;text-align:center;color:#1b1b1b;font-size:26px;white-space:nowrap;overflow:hidden"><span style="position:static;letter-spacing:-0.50px">DSN</span></div>
<div style="left:1359px;top:124px;width:2px;height:50px;background:#d8d8dc"></div>
<div style="left:1358.5px;top:174px;width:3px;height:46.5px;background:#c6c6c6;border-radius:1.5px"></div>
<div style="left:931px;top:124px;width:429px;height:50px;line-height:52px;text-align:center;color:#1b1b1b;font-size:26px;white-space:nowrap;overflow:hidden"><span style="position:static;letter-spacing:-0.72px">NUM_OF_APPROVALS_REQUIRED</span></div>
<div class="c" style="left:12px;top:176.5px;width:273px;height:42px;line-height:41.7px;white-space:nowrap;"><span style="position:static;letter-spacing:0.79px">01JAN60:00:00:00.00</span></div>
<div class="c" style="left:299px;top:176.5px;width:277px;height:42px;line-height:41.7px;white-space:nowrap;"><span style="position:static;letter-spacing:0.79px">31DEC99:23:59:59.00</span></div>
<div class="c" style="left:590px;top:176.5px;width:149px;height:42px;line-height:41.7px;white-space:nowrap;"><span style="position:static;letter-spacing:-0.43px">DC131281</span></div>
<div class="c" style="left:753px;top:176.5px;width:174px;height:42px;line-height:41.7px;white-space:nowrap;"><span style="position:static;letter-spacing:-0.67px">MPE_CONFIG</span></div>
<div class="c" style="left:941px;top:176.5px;width:415px;height:42px;line-height:41.7px;white-space:nowrap;">1</div>
</div>
<div style="left:0px;top:856px;width:2px;height:392px;background:#bdbdbd;z-index:2"></div>
<div class="win" style="left:1148px;top:905px;width:1478px;height:300px;z-index:3">
<div class="tb" style="width:1567px"></div>
<div style="left:18px;top:6px;font-size:27px;color:#fff;line-height:36px;white-space:nowrap"><span style="position:static;letter-spacing:0.64px">#2 DC131281.MPE_DATACATALOG_TABS</span></div>
<svg style="left:1444px;top:7px" width="125" height="40" viewBox="0 0 125 40">
<path d="M3 23 L13 12.5 L23 23" fill="none" stroke="#fff" stroke-width="3"/>
<path d="M47 17 H63.5" stroke="#fff" stroke-width="2.6"/>
<path d="M88.5 8.5 L105 25 M105 8.5 L88.5 25" stroke="#fff" stroke-width="2"/>
</svg>
<div class="srch" style="left:12px;top:56px;width:326px;height:48px"></div>
<div style="left:27px;top:62px;font-size:26px;color:#111;line-height:36px;white-space:nowrap">MPE_CONFIG</div>
<svg style="left:292px;top:65px" width="36" height="34"><g fill="none" stroke="#444" stroke-width="1.6"><circle cx="14.4" cy="14" r="10.6"/><path d="M22.6 23 L29.5 29.8"/></g></svg>
<div class="chk" style="left:362px;top:68px"></div>
<div style="left:407px;top:66px;font-size:27px;color:#333;line-height:36px;white-space:nowrap">Numeric</div>
<svg style="left:1440px;top:68px" width="120" height="34" viewBox="0 0 120 34"><g fill="none" stroke="#555" stroke-width="1.9"><path d="M29 21.5 A14.3 14.3 0 1 1 28.1 8.6"/><path d="M28.7 1 V10.7 H19.3"/></g></svg>
<div style="left:0px;top:120px;width:1567px;height:2px;background:#c9c9c9"></div>
<div style="left:3px;top:124px;width:274px;height:50px;background:#fafafa"></div>
<div style="left:277px;top:124px;width:290px;height:50px;background:#aac09c"></div>
<div style="left:567px;top:124px;width:161px;height:50px;background:#aac09c"></div>
<div style="left:728px;top:124px;width:188px;height:50px;background:#aac09c"></div>
<div style="left:916px;top:124px;width:203px;height:50px;background:#fafafa"></div>
<div style="left:1119px;top:124px;width:292px;height:50px;background:#fafafa"></div>
<div style="left:1411px;top:124px;width:211px;height:50px;background:#fafafa"></div>
<div style="left:2px;top:174.5px;width:1620px;height:120.0px;background:#f3f3f3"></div>
<div style="left:2px;top:293.25px;width:1620px;height:2.5px;background:#c8c8c8"></div>
<div style="left:2px;top:174px;width:1620px;height:6px;background:#d6d6d6"></div>
<div style="left:0px;top:122px;width:3px;height:172.5px;background:#c2c2c2"></div>
<div style="left:276px;top:124px;width:2px;height:50px;background:#d8d8dc"></div>
<div style="left:275.5px;top:174px;width:3px;height:120.5px;background:#c6c6c6;border-radius:1.5px"></div>
<div style="left:3px;top:124px;width:274px;height:50px;line-height:52px;text-align:center;color:#1b1b1b;font-size:26px;white-space:nowrap;overflow:hidden"><span style="position:static;letter-spacing:-0.64px">TX_FROM</span></div>
<div style="left:566px;top:124px;width:2px;height:50px;background:#d8d8dc"></div>
<div style="left:565.5px;top:174px;width:3px;height:120.5px;background:#c6c6c6;border-radius:1.5px"></div>
<div style="left:277px;top:124px;width:290px;height:50px;line-height:52px;text-align:center;color:#1b1b1b;font-size:26px;white-space:nowrap;overflow:hidden"><span style="position:static;letter-spacing:-0.59px">TX_TO</span></div>
<div style="left:727px;top:124px;width:2px;height:50px;background:#d8d8dc"></div>
<div style="left:726.5px;top:174px;width:3px;height:120.5px;background:#c6c6c6;border-radius:1.5px"></div>
<div style="left:567px;top:124px;width:161px;height:50px;line-height:52px;text-align:center;color:#1b1b1b;font-size:26px;white-space:nowrap;overflow:hidden"><span style="position:static;letter-spacing:-0.62px">LIBREF</span></div>
<div style="left:915px;top:124px;width:2px;height:50px;background:#d8d8dc"></div>
<div style="left:914.5px;top:174px;width:3px;height:120.5px;background:#c6c6c6;border-radius:1.5px"></div>
<div style="left:728px;top:124px;width:188px;height:50px;line-height:52px;text-align:center;color:#1b1b1b;font-size:26px;white-space:nowrap;overflow:hidden"><span style="position:static;letter-spacing:-0.50px">DSN</span></div>
<div style="left:1118px;top:124px;width:2px;height:50px;background:#d8d8dc"></div>
<div style="left:1117.5px;top:174px;width:3px;height:120.5px;background:#c6c6c6;border-radius:1.5px"></div>
<div style="left:916px;top:124px;width:203px;height:50px;line-height:52px;text-align:center;color:#1b1b1b;font-size:26px;white-space:nowrap;overflow:hidden"><span style="position:static;letter-spacing:-0.64px">MEMTYPE</span></div>
<div style="left:1410px;top:124px;width:2px;height:50px;background:#d8d8dc"></div>
<div style="left:1409.5px;top:174px;width:3px;height:120.5px;background:#c6c6c6;border-radius:1.5px"></div>
<div style="left:1119px;top:124px;width:292px;height:50px;line-height:52px;text-align:center;color:#1b1b1b;font-size:26px;white-space:nowrap;overflow:hidden"><span style="position:static;letter-spacing:-0.68px">DBMS_MEMTYPE</span></div>
<div style="left:1621px;top:124px;width:2px;height:50px;background:#d8d8dc"></div>
<div style="left:1620.5px;top:174px;width:3px;height:120.5px;background:#c6c6c6;border-radius:1.5px"></div>
<div style="left:1411px;top:124px;width:211px;height:50px;line-height:52px;text-align:center;color:#1b1b1b;font-size:26px;white-space:nowrap;overflow:hidden"><span style="position:static;letter-spacing:-0.66px">MEMLABEL</span></div>
<div class="c" style="left:13px;top:176.5px;width:260px;height:116px;line-height:41.7px;white-space:nowrap;"><span style="position:static;letter-spacing:0.03px">10JAN23:14:55:14.10</span></div>
<div class="c" style="left:287px;top:176.5px;width:276px;height:116px;line-height:41.7px;white-space:nowrap;"><span style="position:static;letter-spacing:0.79px">01JAN99:00:00:00.00</span></div>
<div class="c" style="left:577px;top:176.5px;width:147px;height:116px;line-height:41.7px;white-space:nowrap;"><span style="position:static;letter-spacing:-0.43px">DC131281</span></div>
<div class="c" style="left:738px;top:176.5px;width:174px;height:116px;line-height:41.7px;white-space:nowrap;"><span style="position:static;letter-spacing:-0.67px">MPE_CONFIG</span></div>
<div class="c" style="left:926px;top:176.5px;width:189px;height:116px;line-height:41.7px;white-space:nowrap;"><span style="position:static;letter-spacing:-0.56px">DATA</span></div>
</div>
<div class="win" style="left:2626px;top:412px;width:791px;height:760px;z-index:4">
<div class="tb" style="width:791px"></div>
<div style="left:18px;top:6px;font-size:27px;color:#fff;line-height:36px;white-space:nowrap"><span style="position:static;letter-spacing:0.16px">#3 DC131281.MPE_LOADS</span></div>
<svg style="left:668px;top:7px" width="125" height="40" viewBox="0 0 125 40">
<path d="M3 23 L13 12.5 L23 23" fill="none" stroke="#fff" stroke-width="3"/>
<path d="M47 17 H63.5" stroke="#fff" stroke-width="2.6"/>
<path d="M88.5 8.5 L105 25 M105 8.5 L88.5 25" stroke="#fff" stroke-width="2"/>
</svg>
<div class="srch" style="left:12px;top:56px;width:326px;height:48px"></div>
<div style="left:26px;top:61px;font-size:26px;color:#4e5c69;line-height:36px;white-space:nowrap">Search</div>
<svg style="left:292px;top:65px" width="36" height="34"><g fill="none" stroke="#444" stroke-width="1.6"><circle cx="14.4" cy="14" r="10.6"/><path d="M22.6 23 L29.5 29.8"/></g></svg>
<div class="chk" style="left:362px;top:68px"></div>
<div style="left:407px;top:66px;font-size:27px;color:#333;line-height:36px;white-space:nowrap">Numeric</div>
<svg style="left:664px;top:68px" width="120" height="34" viewBox="0 0 120 34"><g fill="none" stroke="#555" stroke-width="1.9"><path d="M29 21.5 A14.3 14.3 0 1 1 28.1 8.6"/><path d="M28.7 1 V10.7 H19.3"/><path d="M44 6.5 H71 L59.7 19 V30.5 M54 29.5 V19 L43 6.5" stroke-linejoin="round"/></g><g fill="none" stroke="#b0b0b0" stroke-width="1.9" stroke-linejoin="round"><path d="M106.4 2 L113 8.6 L94.5 27.8 Q92 29 85.8 29.2 Q86 23 87.2 20.8 Z"/><path d="M102.2 6.5 L108.8 12.1"/></g></svg>
<div style="left:0px;top:120px;width:791px;height:2px;background:#c9c9c9"></div>
<div style="left:3px;top:124px;width:398px;height:50px;background:#aac09c"></div>
<div style="left:401px;top:124px;width:202px;height:50px;background:#fafafa"></div>
<div style="left:603px;top:124px;width:174px;height:50px;background:#fafafa"></div>
<div style="left:777px;top:124px;width:197px;height:50px;background:#fafafa"></div>
<div style="left:2px;top:174.5px;width:972px;height:48.0px;background:#f3f3f3"></div>
<div style="left:2px;top:221.25px;width:972px;height:2.5px;background:#c8c8c8"></div>
<div style="left:2px;top:222.5px;width:972px;height:48.0px;background:#fff"></div>
<div style="left:2px;top:269.25px;width:972px;height:2.5px;background:#c8c8c8"></div>
<div style="left:2px;top:270.5px;width:972px;height:48.0px;background:#f3f3f3"></div>
<div style="left:2px;top:317.25px;width:972px;height:2.5px;background:#c8c8c8"></div>
<div style="left:2px;top:318.5px;width:972px;height:48.0px;background:#fff"></div>
<div style="left:2px;top:365.25px;width:972px;height:2.5px;background:#c8c8c8"></div>
<div style="left:2px;top:366.5px;width:972px;height:48.0px;background:#f3f3f3"></div>
<div style="left:2px;top:413.25px;width:972px;height:2.5px;background:#c8c8c8"></div>
<div style="left:2px;top:414.5px;width:972px;height:48.0px;background:#fff"></div>
<div style="left:2px;top:461.25px;width:972px;height:2.5px;background:#c8c8c8"></div>
<div style="left:2px;top:462.5px;width:972px;height:48.0px;background:#f3f3f3"></div>
<div style="left:2px;top:509.25px;width:972px;height:2.5px;background:#c8c8c8"></div>
<div style="left:2px;top:510.5px;width:972px;height:48.0px;background:#fff"></div>
<div style="left:2px;top:557.25px;width:972px;height:2.5px;background:#c8c8c8"></div>
<div style="left:2px;top:558.5px;width:972px;height:48.0px;background:#f3f3f3"></div>
<div style="left:2px;top:605.25px;width:972px;height:2.5px;background:#c8c8c8"></div>
<div style="left:2px;top:606.5px;width:972px;height:48.0px;background:#fff"></div>
<div style="left:2px;top:653.25px;width:972px;height:2.5px;background:#c8c8c8"></div>
<div style="left:2px;top:654.5px;width:972px;height:48.0px;background:#f3f3f3"></div>
<div style="left:2px;top:701.25px;width:972px;height:2.5px;background:#c8c8c8"></div>
<div style="left:2px;top:702.5px;width:972px;height:48.0px;background:#fff"></div>
<div style="left:2px;top:749.25px;width:972px;height:2.5px;background:#c8c8c8"></div>
<div style="left:2px;top:174px;width:972px;height:6px;background:#d6d6d6"></div>
<div style="left:0px;top:122px;width:3px;height:628.5px;background:#c2c2c2"></div>
<div style="left:400px;top:124px;width:2px;height:50px;background:#d8d8dc"></div>
<div style="left:399.5px;top:174px;width:3px;height:576.5px;background:#c6c6c6;border-radius:1.5px"></div>
<div style="left:3px;top:124px;width:398px;height:50px;line-height:52px;text-align:center;color:#1b1b1b;font-size:26px;white-space:nowrap;overflow:hidden"><span style="position:static;letter-spacing:-0.64px">CSV_DIR</span></div>
<div style="left:602px;top:124px;width:2px;height:50px;background:#d8d8dc"></div>
<div style="left:601.5px;top:174px;width:3px;height:576.5px;background:#c6c6c6;border-radius:1.5px"></div>
<div style="left:401px;top:124px;width:202px;height:50px;line-height:52px;text-align:center;color:#1b1b1b;font-size:26px;white-space:nowrap;overflow:hidden"><span style="position:static;letter-spacing:-0.64px">USER_NM</span></div>
<div style="left:776px;top:124px;width:2px;height:50px;background:#d8d8dc"></div>
<div style="left:775.5px;top:174px;width:3px;height:576.5px;background:#c6c6c6;border-radius:1.5px"></div>
<div style="left:603px;top:124px;width:174px;height:50px;line-height:52px;text-align:center;color:#1b1b1b;font-size:26px;white-space:nowrap;overflow:hidden"><span style="position:static;letter-spacing:-0.62px">STATUS</span></div>
<div style="left:973px;top:124px;width:2px;height:50px;background:#d8d8dc"></div>
<div style="left:972.5px;top:174px;width:3px;height:576.5px;background:#c6c6c6;border-radius:1.5px"></div>
<div style="left:777px;top:124px;width:197px;height:50px;line-height:52px;text-align:center;color:#1b1b1b;font-size:26px;white-space:nowrap;overflow:hidden"><span style="position:static;letter-spacing:-0.66px">DURATION</span></div>
<div class="c" style="left:13px;top:176.5px;width:384px;height:44px;line-height:41.7px;white-space:nowrap;"><span style="position:static;letter-spacing:0.79px">DC20221228T200633027_199800</span></div>
<div class="c" style="left:411px;top:176.5px;width:188px;height:44px;line-height:41.7px;white-space:nowrap;"><span style="position:static;letter-spacing:0.90px">secretuser</span></div>
<div class="c" style="left:613px;top:176.5px;width:160px;height:44px;line-height:41.7px;white-space:nowrap;"><span style="position:static;letter-spacing:-0.64px">SUCCESS</span></div>
<div class="c" style="left:13px;top:224.5px;width:384px;height:44px;line-height:41.7px;white-space:nowrap;"><span style="position:static;letter-spacing:0.79px">DC20230105T124646778_206500</span></div>
<div class="c" style="left:411px;top:224.5px;width:188px;height:44px;line-height:41.7px;white-space:nowrap;"><span style="position:static;letter-spacing:0.90px">secretuser</span></div>
<div class="c" style="left:613px;top:224.5px;width:160px;height:44px;line-height:41.7px;white-space:nowrap;"><span style="position:static;letter-spacing:-0.64px">SUCCESS</span></div>
<div class="c" style="left:13px;top:272.5px;width:384px;height:44px;line-height:41.7px;white-space:nowrap;"><span style="position:static;letter-spacing:0.79px">DC20230106T154629303_073600</span></div>
<div class="c" style="left:411px;top:272.5px;width:188px;height:44px;line-height:41.7px;white-space:nowrap;"><span style="position:static;letter-spacing:0.90px">secretuser</span></div>
<div class="c" style="left:613px;top:272.5px;width:160px;height:44px;line-height:41.7px;white-space:nowrap;"><span style="position:static;letter-spacing:-0.64px">SUCCESS</span></div>
<div class="c" style="left:13px;top:320.5px;width:384px;height:44px;line-height:41.7px;white-space:nowrap;"><span style="position:static;letter-spacing:0.43px">DC20230110T145433387_051700</span></div>
<div class="c" style="left:411px;top:320.5px;width:188px;height:44px;line-height:41.7px;white-space:nowrap;"><span style="position:static;letter-spacing:0.90px">secretuser</span></div>
<div class="c" style="left:613px;top:320.5px;width:160px;height:44px;line-height:41.7px;white-space:nowrap;"><span style="position:static;letter-spacing:-0.64px">SUCCESS</span></div>
<div class="c" style="left:13px;top:368.5px;width:384px;height:44px;line-height:41.7px;white-space:nowrap;"><span style="position:static;letter-spacing:0.43px">DC20230110T145451875_524600</span></div>
<div class="c" style="left:411px;top:368.5px;width:188px;height:44px;line-height:41.7px;white-space:nowrap;"><span style="position:static;letter-spacing:0.90px">secretuser</span></div>
<div class="c" style="left:613px;top:368.5px;width:160px;height:44px;line-height:41.7px;white-space:nowrap;"><span style="position:static;letter-spacing:-0.64px">SUCCESS</span></div>
<div class="c" style="left:13px;top:416.5px;width:384px;height:44px;line-height:41.7px;white-space:nowrap;"><span style="position:static;letter-spacing:0.12px">DC20230110T151426613_1257900</span></div>
<div class="c" style="left:411px;top:416.5px;width:188px;height:44px;line-height:41.7px;white-space:nowrap;"><span style="position:static;letter-spacing:0.90px">secretuser</span></div>
<div class="c" style="left:613px;top:416.5px;width:160px;height:44px;line-height:41.7px;white-space:nowrap;"><span style="position:static;letter-spacing:-0.64px">SUCCESS</span></div>
<div class="c" style="left:13px;top:464.5px;width:384px;height:44px;line-height:41.7px;white-space:nowrap;"><span style="position:static;letter-spacing:0.25px">DC20230112T152015839_405100</span></div>
<div class="c" style="left:411px;top:464.5px;width:188px;height:44px;line-height:41.7px;white-space:nowrap;"><span style="position:static;letter-spacing:0.90px">secretuser</span></div>
<div class="c" style="left:613px;top:464.5px;width:160px;height:44px;line-height:41.7px;white-space:nowrap;"><span style="position:static;letter-spacing:-0.64px">SUCCESS</span></div>
<div class="c" style="left:13px;top:512.5px;width:384px;height:44px;line-height:41.7px;white-space:nowrap;"><span style="position:static;letter-spacing:0.25px">DC20230112T152101559_438000</span></div>
<div class="c" style="left:411px;top:512.5px;width:188px;height:44px;line-height:41.7px;white-space:nowrap;"><span style="position:static;letter-spacing:0.90px">secretuser</span></div>
<div class="c" style="left:613px;top:512.5px;width:160px;height:44px;line-height:41.7px;white-space:nowrap;"><span style="position:static;letter-spacing:-0.64px">SUCCESS</span></div>
<div class="c" style="left:13px;top:560.5px;width:384px;height:44px;line-height:41.7px;white-space:nowrap;"><span style="position:static;letter-spacing:0.43px">DC20230113T150531032_006500</span></div>
<div class="c" style="left:411px;top:560.5px;width:188px;height:44px;line-height:41.7px;white-space:nowrap;"><span style="position:static;letter-spacing:0.90px">secretuser</span></div>
<div class="c" style="left:613px;top:560.5px;width:160px;height:44px;line-height:41.7px;white-space:nowrap;"><span style="position:static;letter-spacing:-0.64px">SUCCESS</span></div>
<div class="c" style="left:13px;top:608.5px;width:384px;height:44px;line-height:41.7px;white-space:nowrap;"><span style="position:static;letter-spacing:0.07px">DC20230118T113800860_411400</span></div>
<div class="c" style="left:411px;top:608.5px;width:188px;height:44px;line-height:41.7px;white-space:nowrap;"><span style="position:static;letter-spacing:0.90px">secretuser</span></div>
<div class="c" style="left:613px;top:608.5px;width:160px;height:44px;line-height:41.7px;white-space:nowrap;"><span style="position:static;letter-spacing:-0.64px">SUCCESS</span></div>
<div class="c" style="left:13px;top:656.5px;width:384px;height:44px;line-height:41.7px;white-space:nowrap;"><span style="position:static;letter-spacing:0.61px">DC20230118T143522388_728300</span></div>
<div class="c" style="left:411px;top:656.5px;width:188px;height:44px;line-height:41.7px;white-space:nowrap;"><span style="position:static;letter-spacing:0.90px">secretuser</span></div>
<div class="c" style="left:613px;top:656.5px;width:160px;height:44px;line-height:41.7px;white-space:nowrap;"><span style="position:static;letter-spacing:-0.64px">SUCCESS</span></div>
<div class="c" style="left:13px;top:704.5px;width:384px;height:44px;line-height:41.7px;white-space:nowrap;"><span style="position:static;letter-spacing:0.61px">DC20230124T131228586_328000</span></div>
<div class="c" style="left:411px;top:704.5px;width:188px;height:44px;line-height:41.7px;white-space:nowrap;"><span style="position:static;letter-spacing:0.90px">secretuser</span></div>
<div class="c" style="left:613px;top:704.5px;width:160px;height:44px;line-height:41.7px;white-space:nowrap;"><span style="position:static;letter-spacing:-0.64px">SUCCESS</span></div>
</div>
<div class="win" style="left:10px;top:1160px;width:1713px;height:642px;z-index:5">
<div class="tb" style="width:1713px"></div>
<div style="left:18px;top:6px;font-size:27px;color:#fff;line-height:36px;white-space:nowrap"><span style="position:static;letter-spacing:0.00px">#4 DC131281.MPE_CONFIG</span></div>
<svg style="left:1590px;top:7px" width="125" height="40" viewBox="0 0 125 40">
<path d="M3 23 L13 12.5 L23 23" fill="none" stroke="#fff" stroke-width="3"/>
<path d="M47 17 H63.5" stroke="#fff" stroke-width="2.6"/>
<path d="M88.5 8.5 L105 25 M105 8.5 L88.5 25" stroke="#fff" stroke-width="2"/>
</svg>
<div class="srch" style="left:12px;top:56px;width:326px;height:48px"></div>
<div style="left:26px;top:61px;font-size:26px;color:#4e5c69;line-height:36px;white-space:nowrap">Search</div>
<svg style="left:292px;top:65px" width="36" height="34"><g fill="none" stroke="#444" stroke-width="1.6"><circle cx="14.4" cy="14" r="10.6"/><path d="M22.6 23 L29.5 29.8"/></g></svg>
<div class="chk" style="left:362px;top:68px"></div>
<div style="left:407px;top:66px;font-size:27px;color:#333;line-height:36px;white-space:nowrap">Numeric</div>
<svg style="left:1586px;top:68px" width="120" height="34" viewBox="0 0 120 34"><g fill="none" stroke="#555" stroke-width="1.9"><path d="M29 21.5 A14.3 14.3 0 1 1 28.1 8.6"/><path d="M28.7 1 V10.7 H19.3"/><path d="M44 6.5 H71 L59.7 19 V30.5 M54 29.5 V19 L43 6.5" stroke-linejoin="round"/></g><g fill="none" stroke="#555" stroke-width="1.9" stroke-linejoin="round"><path d="M106.4 2 L113 8.6 L94.5 27.8 Q92 29 85.8 29.2 Q86 23 87.2 20.8 Z"/><path d="M102.2 6.5 L108.8 12.1"/></g></svg>
<div style="left:0px;top:120px;width:1713px;height:2px;background:#c9c9c9"></div>
<div style="left:2px;top:124px;width:68px;height:50px;background:#aac09c"></div>
<div style="left:70px;top:124px;width:228px;height:50px;background:#aac09c"></div>
<div style="left:298px;top:124px;width:380px;height:50px;background:#aac09c"></div>
<div style="left:678px;top:124px;width:401px;height:50px;background:#fafafa"></div>
<div style="left:1079px;top:124px;width:232px;height:50px;background:#fafafa"></div>
<div style="left:1311px;top:124px;width:399px;height:50px;background:#fafafa"></div>
<div style="left:2px;top:174.5px;width:1708px;height:256.5px;background:#f3f3f3"></div>
<div style="left:2px;top:429.75px;width:1708px;height:2.5px;background:#c8c8c8"></div>
<div style="left:2px;top:431.0px;width:1708px;height:300.0px;background:#fff"></div>
<div style="left:2px;top:729.75px;width:1708px;height:2.5px;background:#c8c8c8"></div>
<div style="left:2px;top:174px;width:1708px;height:6px;background:#d6d6d6"></div>
<div style="left:0px;top:122px;width:3px;height:609.0px;background:#c2c2c2"></div>
<div style="left:69px;top:124px;width:2px;height:50px;background:#d8d8dc"></div>
<div style="left:68.5px;top:174px;width:3px;height:557.0px;background:#c6c6c6;border-radius:1.5px"></div>
<div style="left:297px;top:124px;width:2px;height:50px;background:#d8d8dc"></div>
<div style="left:296.5px;top:174px;width:3px;height:557.0px;background:#c6c6c6;border-radius:1.5px"></div>
<div style="left:70px;top:124px;width:228px;height:50px;line-height:52px;text-align:center;color:#1b1b1b;font-size:26px;white-space:nowrap;overflow:hidden"><span style="position:static;letter-spacing:-0.66px">VAR_SCOPE</span></div>
<div style="left:677px;top:124px;width:2px;height:50px;background:#d8d8dc"></div>
<div style="left:676.5px;top:174px;width:3px;height:557.0px;background:#c6c6c6;border-radius:1.5px"></div>
<div style="left:298px;top:124px;width:380px;height:50px;line-height:52px;text-align:center;color:#1b1b1b;font-size:26px;white-space:nowrap;overflow:hidden"><span style="position:static;letter-spacing:-0.65px">VAR_NAME</span></div>
<div style="left:1078px;top:124px;width:2px;height:50px;background:#d8d8dc"></div>
<div style="left:1077.5px;top:174px;width:3px;height:557.0px;background:#c6c6c6;border-radius:1.5px"></div>
<div style="left:678px;top:124px;width:401px;height:50px;line-height:52px;text-align:center;color:#1b1b1b;font-size:26px;white-space:nowrap;overflow:hidden"><span style="position:static;letter-spacing:-0.66px">VAR_VALUE</span></div>
<div style="left:1310px;top:124px;width:2px;height:50px;background:#d8d8dc"></div>
<div style="left:1309.5px;top:174px;width:3px;height:557.0px;background:#c6c6c6;border-radius:1.5px"></div>
<div style="left:1079px;top:124px;width:232px;height:50px;line-height:52px;text-align:center;color:#1b1b1b;font-size:26px;white-space:nowrap;overflow:hidden"><span style="position:static;letter-spacing:-0.67px">VAR_ACTIVE</span></div>
<div style="left:1709px;top:124px;width:2px;height:50px;background:#d8d8dc"></div>
<div style="left:1708.5px;top:174px;width:3px;height:557.0px;background:#c6c6c6;border-radius:1.5px"></div>
<div style="left:1311px;top:124px;width:399px;height:50px;line-height:52px;text-align:center;color:#1b1b1b;font-size:26px;white-space:nowrap;overflow:hidden"><span style="position:static;letter-spacing:-0.65px">VAR_DESC</span></div>
<div class="c" style="left:12px;top:176.5px;width:54px;height:252.5px;line-height:41.7px;white-space:nowrap;left:-32px;width:90px;text-align:right;white-space:nowrap"><span style="position:static;letter-spacing:0.59px">9.00</span></div>
<div class="c" style="left:80px;top:176.5px;width:214px;height:252.5px;line-height:41.7px;white-space:nowrap;"><span style="position:static;letter-spacing:-0.38px">DC</span></div>
<div class="c" style="left:308px;top:176.5px;width:366px;height:252.5px;line-height:41.7px;white-space:nowrap;"><span style="position:static;letter-spacing:-0.69px">DC_EMAIL_ALERTS</span></div>
<div class="c" style="left:688px;top:176.5px;width:387px;height:252.5px;line-height:41.7px;white-space:nowrap;"><span style="position:static;letter-spacing:-0.38px">NO</span></div>
<div class="c" style="left:1089px;top:176.5px;width:218px;height:252.5px;line-height:41.7px;white-space:nowrap;">1</div>
<div class="c" style="left:1321px;top:176.5px;width:385px;height:252.5px;line-height:41.7px;white-space:nowrap;"><span style="position:static;letter-spacing:0.27px">YES or NO to enable email</span><br><span style="position:static;letter-spacing:0.63px">alerts. Note - this requires</span><br><span style="position:static;letter-spacing:0.68px">email options to be</span><br><span style="position:static;letter-spacing:0.63px">preconfigured! They can be</span><br><span style="position:static;letter-spacing:0.71px">configured in the settings stp if</span><br><span style="position:static;letter-spacing:0.86px">needed.</span></div>
<div class="c" style="left:12px;top:433.0px;width:54px;height:296px;line-height:41.7px;white-space:nowrap;left:-32px;width:90px;text-align:right;white-space:nowrap"><span style="position:static;letter-spacing:0.59px">9.00</span></div>
<div class="c" style="left:80px;top:433.0px;width:214px;height:296px;line-height:41.7px;white-space:nowrap;"><span style="position:static;letter-spacing:-0.38px">DC</span></div>
<div class="c" style="left:308px;top:433.0px;width:366px;height:296px;line-height:41.7px;white-space:nowrap;"><span style="position:static;letter-spacing:-0.70px">DC_VIEWLIB_CHECK</span></div>
<div class="c" style="left:688px;top:433.0px;width:387px;height:296px;line-height:41.7px;white-space:nowrap;"><span style="position:static;letter-spacing:-0.38px">NO</span></div>
<div class="c" style="left:1089px;top:433.0px;width:218px;height:296px;line-height:41.7px;white-space:nowrap;">1</div>
<div class="c" style="left:1321px;top:433.0px;width:385px;height:296px;line-height:41.7px;white-space:nowrap;"><span style="position:static;letter-spacing:0.41px">Set to YES to enable library</span><br><span style="position:static;letter-spacing:0.73px">validity checking in viewLibs</span><br><span style="position:static;letter-spacing:0.58px">service.  Note: this can make</span><br><span style="position:static;letter-spacing:0.68px">the service very slow if there</span><br><span style="position:static;letter-spacing:0.58px">are lots of external libraries.  If</span><br><span style="position:static;letter-spacing:0.74px">there are many libraries</span></div>
</div>
<div class="win" style="left:1734px;top:1160px;width:1712px;height:642px;z-index:6">
<div class="tb" style="width:1712px"></div>
<div style="left:18px;top:6px;font-size:27px;color:#fff;line-height:36px;white-space:nowrap"><span style="position:static;letter-spacing:-0.14px">#5 DC131281.MPE_SECURITY</span></div>
<svg style="left:1589px;top:7px" width="125" height="40" viewBox="0 0 125 40">
<path d="M3 23 L13 12.5 L23 23" fill="none" stroke="#fff" stroke-width="3"/>
<path d="M47 17 H63.5" stroke="#fff" stroke-width="2.6"/>
<path d="M88.5 8.5 L105 25 M105 8.5 L88.5 25" stroke="#fff" stroke-width="2"/>
</svg>
<div class="srch" style="left:12px;top:56px;width:326px;height:48px"></div>
<div style="left:26px;top:61px;font-size:26px;color:#4e5c69;line-height:36px;white-space:nowrap">Search</div>
<svg style="left:292px;top:65px" width="36" height="34"><g fill="none" stroke="#444" stroke-width="1.6"><circle cx="14.4" cy="14" r="10.6"/><path d="M22.6 23 L29.5 29.8"/></g></svg>
<div class="chk" style="left:362px;top:68px"></div>
<div style="left:407px;top:66px;font-size:27px;color:#333;line-height:36px;white-space:nowrap">Numeric</div>
<svg style="left:1585px;top:68px" width="120" height="34" viewBox="0 0 120 34"><g fill="none" stroke="#555" stroke-width="1.9"><path d="M29 21.5 A14.3 14.3 0 1 1 28.1 8.6"/><path d="M28.7 1 V10.7 H19.3"/><path d="M44 6.5 H71 L59.7 19 V30.5 M54 29.5 V19 L43 6.5" stroke-linejoin="round"/></g><g fill="none" stroke="#555" stroke-width="1.9" stroke-linejoin="round"><path d="M106.4 2 L113 8.6 L94.5 27.8 Q92 29 85.8 29.2 Q86 23 87.2 20.8 Z"/><path d="M102.2 6.5 L108.8 12.1"/></g></svg>
<div style="left:0px;top:120px;width:1712px;height:2px;background:#c9c9c9"></div>
<div style="left:3px;top:124px;width:318px;height:50px;background:#fafafa"></div>
<div style="left:321px;top:124px;width:322px;height:50px;background:#aac09c"></div>
<div style="left:643px;top:124px;width:180px;height:50px;background:#aac09c"></div>
<div style="left:823px;top:124px;width:146px;height:50px;background:#aac09c"></div>
<div style="left:969px;top:124px;width:298px;height:50px;background:#aac09c"></div>
<div style="left:1267px;top:124px;width:443px;height:50px;background:#aac09c"></div>
<div style="left:2px;top:174.5px;width:1708px;height:88.0px;background:#f3f3f3"></div>
<div style="left:2px;top:261.25px;width:1708px;height:2.5px;background:#c8c8c8"></div>
<div style="left:2px;top:262.5px;width:1708px;height:88.0px;background:#fff"></div>
<div style="left:2px;top:349.25px;width:1708px;height:2.5px;background:#c8c8c8"></div>
<div style="left:2px;top:350.5px;width:1708px;height:88.0px;background:#f3f3f3"></div>
<div style="left:2px;top:437.25px;width:1708px;height:2.5px;background:#c8c8c8"></div>
<div style="left:2px;top:438.5px;width:1708px;height:88.0px;background:#fff"></div>
<div style="left:2px;top:525.25px;width:1708px;height:2.5px;background:#c8c8c8"></div>
<div style="left:2px;top:526.5px;width:1708px;height:48.0px;background:#f3f3f3"></div>
<div style="left:2px;top:573.25px;width:1708px;height:2.5px;background:#c8c8c8"></div>
<div style="left:2px;top:574.5px;width:1708px;height:47.0px;background:#fff"></div>
<div style="left:2px;top:620.25px;width:1708px;height:2.5px;background:#c8c8c8"></div>
<div style="left:2px;top:174px;width:1708px;height:6px;background:#d6d6d6"></div>
<div style="left:0px;top:122px;width:3px;height:499.5px;background:#c2c2c2"></div>
<div style="left:320px;top:124px;width:2px;height:50px;background:#d8d8dc"></div>
<div style="left:319.5px;top:174px;width:3px;height:447.5px;background:#c6c6c6;border-radius:1.5px"></div>
<div style="left:3px;top:124px;width:318px;height:50px;line-height:52px;text-align:center;color:#1b1b1b;font-size:26px;white-space:nowrap;overflow:hidden"><span style="position:static;letter-spacing:-0.64px">TX_FROM</span></div>
<div style="left:642px;top:124px;width:2px;height:50px;background:#d8d8dc"></div>
<div style="left:641.5px;top:174px;width:3px;height:447.5px;background:#c6c6c6;border-radius:1.5px"></div>
<div style="left:321px;top:124px;width:322px;height:50px;line-height:52px;text-align:center;color:#1b1b1b;font-size:26px;white-space:nowrap;overflow:hidden"><span style="position:static;letter-spacing:-0.59px">TX_TO</span></div>
<div style="left:822px;top:124px;width:2px;height:50px;background:#d8d8dc"></div>
<div style="left:821.5px;top:174px;width:3px;height:447.5px;background:#c6c6c6;border-radius:1.5px"></div>
<div style="left:643px;top:124px;width:180px;height:50px;line-height:52px;text-align:center;color:#1b1b1b;font-size:26px;white-space:nowrap;overflow:hidden"><span style="position:static;letter-spacing:-0.62px">LIBREF</span></div>
<div style="left:968px;top:124px;width:2px;height:50px;background:#d8d8dc"></div>
<div style="left:967.5px;top:174px;width:3px;height:447.5px;background:#c6c6c6;border-radius:1.5px"></div>
<div style="left:823px;top:124px;width:146px;height:50px;line-height:52px;text-align:center;color:#1b1b1b;font-size:26px;white-space:nowrap;overflow:hidden"><span style="position:static;letter-spacing:-0.50px">DSN</span></div>
<div style="left:1266px;top:124px;width:2px;height:50px;background:#d8d8dc"></div>
<div style="left:1265.5px;top:174px;width:3px;height:447.5px;background:#c6c6c6;border-radius:1.5px"></div>
<div style="left:969px;top:124px;width:298px;height:50px;line-height:52px;text-align:center;color:#1b1b1b;font-size:26px;white-space:nowrap;overflow:hidden"><span style="position:static;letter-spacing:-0.68px">ACCESS_LEVEL</span></div>
<div style="left:1709px;top:124px;width:2px;height:50px;background:#d8d8dc"></div>
<div style="left:1708.5px;top:174px;width:3px;height:447.5px;background:#c6c6c6;border-radius:1.5px"></div>
<div style="left:1267px;top:124px;width:443px;height:50px;line-height:52px;text-align:center;color:#1b1b1b;font-size:26px;white-space:nowrap;overflow:hidden"><span style="position:static;letter-spacing:-0.66px">SAS_GROUP</span></div>
<div class="c" style="left:13px;top:176.5px;width:304px;height:84px;line-height:41.7px;white-space:nowrap;"><span style="position:static;letter-spacing:0.79px">01JAN60:00:00:00.00</span></div>
<div class="c" style="left:331px;top:176.5px;width:308px;height:84px;line-height:41.7px;white-space:nowrap;"><span style="position:static;letter-spacing:0.79px">31DEC99:23:59:59.00</span></div>
<div class="c" style="left:653px;top:176.5px;width:166px;height:84px;line-height:41.7px;white-space:nowrap;"><span style="position:static;letter-spacing:-0.59px">*ALL*</span></div>
<div class="c" style="left:833px;top:176.5px;width:132px;height:84px;line-height:41.7px;white-space:nowrap;"><span style="position:static;letter-spacing:-0.59px">*ALL*</span></div>
<div class="c" style="left:979px;top:176.5px;width:284px;height:84px;line-height:41.7px;white-space:nowrap;"><span style="position:static;letter-spacing:-0.64px">APPROVE</span></div>
<div class="c" style="left:1277px;top:176.5px;width:429px;height:84px;line-height:41.7px;white-space:nowrap;"><span style="position:static;letter-spacing:1.12px">sec-sas9-prd-int-sasplatform-</span><br><span style="position:static;letter-spacing:0.32px">300114sasjs</span></div>
<div class="c" style="left:13px;top:264.5px;width:304px;height:84px;line-height:41.7px;white-space:nowrap;"><span style="position:static;letter-spacing:0.79px">01JAN60:00:00:00.00</span></div>
<div class="c" style="left:331px;top:264.5px;width:308px;height:84px;line-height:41.7px;white-space:nowrap;"><span style="position:static;letter-spacing:0.79px">31DEC99:23:59:59.00</span></div>
<div class="c" style="left:653px;top:264.5px;width:166px;height:84px;line-height:41.7px;white-space:nowrap;"><span style="position:static;letter-spacing:-0.59px">*ALL*</span></div>
<div class="c" style="left:833px;top:264.5px;width:132px;height:84px;line-height:41.7px;white-space:nowrap;"><span style="position:static;letter-spacing:-0.59px">*ALL*</span></div>
<div class="c" style="left:979px;top:264.5px;width:284px;height:84px;line-height:41.7px;white-space:nowrap;"><span style="position:static;letter-spacing:-0.56px">EDIT</span></div>
<div class="c" style="left:1277px;top:264.5px;width:429px;height:84px;line-height:41.7px;white-space:nowrap;"><span style="position:static;letter-spacing:1.12px">sec-sas9-prd-int-sasplatform-</span><br><span style="position:static;letter-spacing:0.32px">300114sasjs</span></div>
<div class="c" style="left:13px;top:352.5px;width:304px;height:84px;line-height:41.7px;white-space:nowrap;"><span style="position:static;letter-spacing:0.79px">01JAN60:00:00:00.00</span></div>
<div class="c" style="left:331px;top:352.5px;width:308px;height:84px;line-height:41.7px;white-space:nowrap;"><span style="position:static;letter-spacing:0.79px">31DEC99:23:59:59.00</span></div>
<div class="c" style="left:653px;top:352.5px;width:166px;height:84px;line-height:41.7px;white-space:nowrap;"><span style="position:static;letter-spacing:-0.59px">*ALL*</span></div>
<div class="c" style="left:833px;top:352.5px;width:132px;height:84px;line-height:41.7px;white-space:nowrap;"><span style="position:static;letter-spacing:-0.59px">*ALL*</span></div>
<div class="c" style="left:979px;top:352.5px;width:284px;height:84px;line-height:41.7px;white-space:nowrap;"><span style="position:static;letter-spacing:-0.64px">APPROVE</span></div>
<div class="c" style="left:1277px;top:352.5px;width:429px;height:84px;line-height:41.7px;white-space:nowrap;"><span style="position:static;letter-spacing:1.12px">sec-sas9-prd-ext-sasplatform-</span><br><span style="position:static;letter-spacing:0.32px">300114sasjs</span></div>
<div class="c" style="left:13px;top:440.5px;width:304px;height:84px;line-height:41.7px;white-space:nowrap;"><span style="position:static;letter-spacing:0.79px">01JAN60:00:00:00.00</span></div>
<div class="c" style="left:331px;top:440.5px;width:308px;height:84px;line-height:41.7px;white-space:nowrap;"><span style="position:static;letter-spacing:0.79px">31DEC99:23:59:59.00</span></div>
<div class="c" style="left:653px;top:440.5px;width:166px;height:84px;line-height:41.7px;white-space:nowrap;"><span style="position:static;letter-spacing:-0.59px">*ALL*</span></div>
<div class="c" style="left:833px;top:440.5px;width:132px;height:84px;line-height:41.7px;white-space:nowrap;"><span style="position:static;letter-spacing:-0.59px">*ALL*</span></div>
<div class="c" style="left:979px;top:440.5px;width:284px;height:84px;line-height:41.7px;white-space:nowrap;"><span style="position:static;letter-spacing:-0.56px">EDIT</span></div>
<div class="c" style="left:1277px;top:440.5px;width:429px;height:84px;line-height:41.7px;white-space:nowrap;"><span style="position:static;letter-spacing:1.12px">sec-sas9-prd-ext-sasplatform-</span><br><span style="position:static;letter-spacing:0.32px">300114sasjs</span></div>
<div class="c" style="left:13px;top:528.5px;width:304px;height:44px;line-height:41.7px;white-space:nowrap;"><span style="position:static;letter-spacing:0.79px">01JAN60:00:00:00.00</span></div>
<div class="c" style="left:331px;top:528.5px;width:308px;height:44px;line-height:41.7px;white-space:nowrap;"><span style="position:static;letter-spacing:0.79px">31DEC99:23:59:59.00</span></div>
<div class="c" style="left:653px;top:528.5px;width:166px;height:44px;line-height:41.7px;white-space:nowrap;"><span style="position:static;letter-spacing:-0.59px">*ALL*</span></div>
<div class="c" style="left:833px;top:528.5px;width:132px;height:44px;line-height:41.7px;white-space:nowrap;"><span style="position:static;letter-spacing:-0.59px">*ALL*</span></div>
<div class="c" style="left:979px;top:528.5px;width:284px;height:44px;line-height:41.7px;white-space:nowrap;"><span style="position:static;letter-spacing:-0.56px">EDIT</span></div>
<div class="c" style="left:1277px;top:528.5px;width:429px;height:44px;line-height:41.7px;white-space:nowrap;"><span style="position:static;letter-spacing:1.00px">dc-admin</span></div>
<div class="c" style="left:13px;top:576.5px;width:304px;height:43px;line-height:41.7px;white-space:nowrap;"><span style="position:static;letter-spacing:0.79px">01JAN60:00:00:00.00</span></div>
<div class="c" style="left:331px;top:576.5px;width:308px;height:43px;line-height:41.7px;white-space:nowrap;"><span style="position:static;letter-spacing:0.79px">31DEC99:23:59:59.00</span></div>
<div class="c" style="left:653px;top:576.5px;width:166px;height:43px;line-height:41.7px;white-space:nowrap;"><span style="position:static;letter-spacing:-0.59px">*ALL*</span></div>
<div class="c" style="left:833px;top:576.5px;width:132px;height:43px;line-height:41.7px;white-space:nowrap;"><span style="position:static;letter-spacing:-0.59px">*ALL*</span></div>
<div class="c" style="left:979px;top:576.5px;width:284px;height:43px;line-height:41.7px;white-space:nowrap;"><span style="position:static;letter-spacing:-0.64px">APPROVE</span></div>
<div class="c" style="left:1277px;top:576.5px;width:429px;height:43px;line-height:41.7px;white-space:nowrap;"><span style="position:static;letter-spacing:1.00px">dc-admin</span></div>
</div>
<div style="left:1723px;top:1165px;width:11px;height:137px;background:#dedede;z-index:4"></div>
<div style="left:1723px;top:1302px;width:11px;height:500px;background:#c9c9c9;z-index:4"></div>
<div style="left:1000px;top:1840px;width:1440px;height:74px;background:radial-gradient(ellipse 560px 60px at 50% 100%, rgba(40,40,70,0.16), rgba(40,40,70,0) 100%)"></div>
<div style="left:0px;top:1880px;width:40px;height:40px;background:#1d2126"></div>
<div style="left:0px;top:1850px;width:70px;height:63.5px;background:#f4f5fc;border-bottom-left-radius:22px"></div>
<div style="left:3406px;top:1880px;width:40px;height:40px;background:#1d2126"></div>
<div style="left:3376px;top:1850px;width:70px;height:63.5px;background:#f4f5fc;border-bottom-right-radius:12px"></div>
<div style="left:32px;top:1834px;width:600px;height:48px;background:#4e8526;border-radius:5px"></div>
<svg style="left:230px;top:1844px" width="30" height="30"><path d="M15.5 3 V26 M4 14.5 H27" stroke="#fff" stroke-width="2.4"/></svg>
<div style="left:270px;top:1844px;font-size:23px;color:#fff;line-height:30px;letter-spacing:0.9px;white-space:nowrap;-webkit-text-stroke:0.6px currentColor">ADD RECORD</div>
<div style="left:0px;top:1913.5px;width:3446px;height:6.5px;background:#1d2126;z-index:10"></div>
</div></body></html>
